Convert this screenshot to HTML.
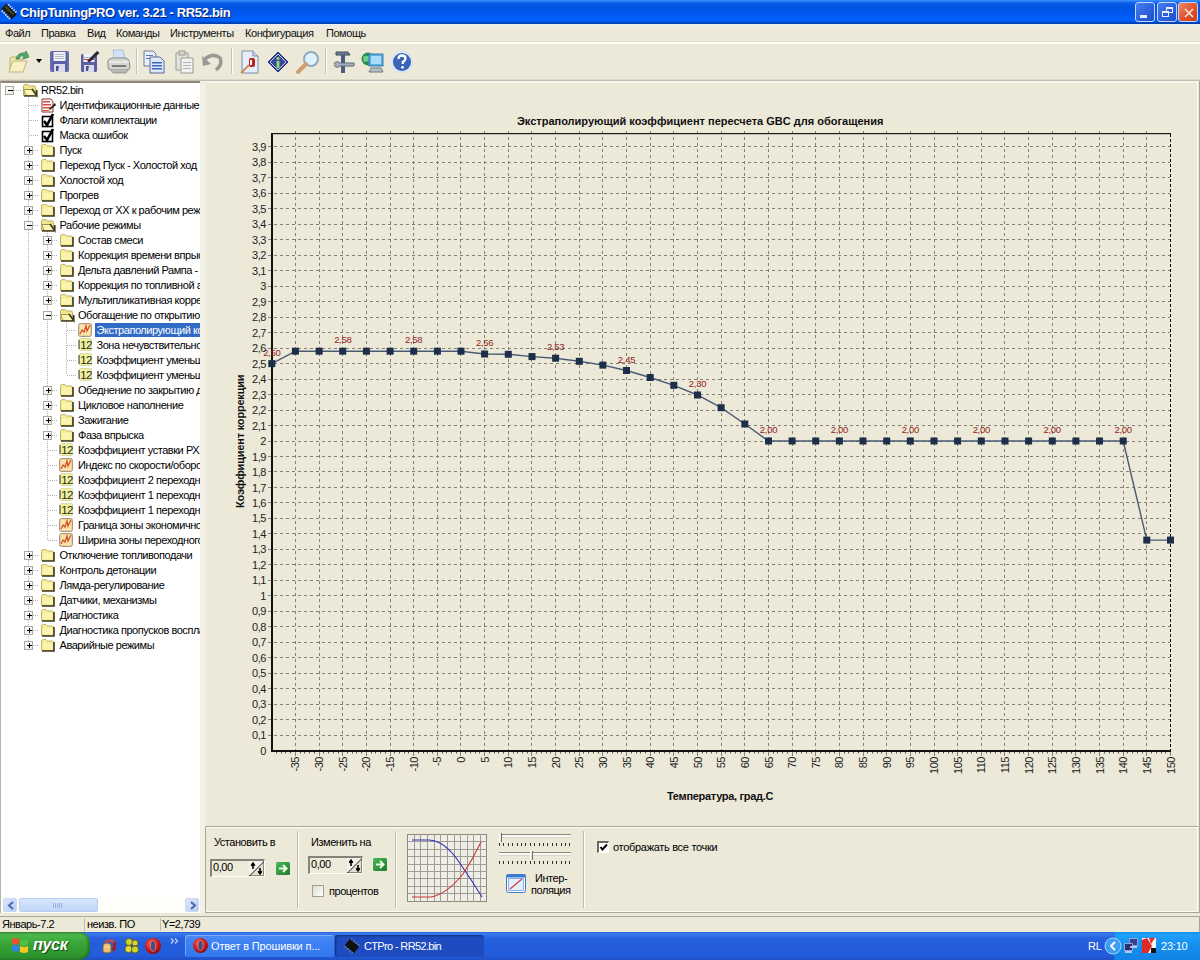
<!DOCTYPE html><html><head><meta charset="utf-8"><title>ChipTuningPRO</title><style>
*{margin:0;padding:0;box-sizing:border-box}
html,body{width:1200px;height:960px;overflow:hidden;background:#ECE9D8;font-family:"Liberation Sans",sans-serif;font-size:11px;color:#000}
.a{position:absolute}
.t{position:absolute;white-space:nowrap;letter-spacing:-0.45px;line-height:13px}
</style></head><body>
<div class="a" style="left:0;top:0;width:1200px;height:24px;background:linear-gradient(#3d95ff 0px,#2a80f8 1px,#0a5ce8 3px,#0054e3 8px,#0056ea 13px,#005ef8 18px,#0060fa 21px,#0048c8 22.5px,#003aa0 24px)"></div>
<div class="a" style="left:0;top:24px;width:1200px;height:1px;background:#e6ecf6"></div>
<svg class="a" style="left:-1px;top:1px" width="20" height="20" viewBox="0 0 20 20"><g transform="translate(10 10.5) rotate(45) translate(-8.5 -7)"><rect x="1" y="3.5" width="15" height="7" fill="#1a1a10"/><rect x="2" y="5" width="12" height="2" fill="#3a4a20"/><rect x="3" y="1.5" width="1.2" height="2" fill="#f0f0f0"/><rect x="3" y="10.5" width="1.2" height="2" fill="#f0f0f0"/><rect x="5.5" y="1.5" width="1.2" height="2" fill="#f0f0f0"/><rect x="5.5" y="10.5" width="1.2" height="2" fill="#f0f0f0"/><rect x="8" y="1.5" width="1.2" height="2" fill="#f0f0f0"/><rect x="8" y="10.5" width="1.2" height="2" fill="#f0f0f0"/><rect x="10.5" y="1.5" width="1.2" height="2" fill="#f0f0f0"/><rect x="10.5" y="10.5" width="1.2" height="2" fill="#f0f0f0"/><rect x="13" y="1.5" width="1.2" height="2" fill="#f0f0f0"/><rect x="13" y="10.5" width="1.2" height="2" fill="#f0f0f0"/></g></svg>
<div class="t" style="left:20px;top:5px;font-weight:bold;font-size:13px;line-height:16px;color:#fff;letter-spacing:-0.35px;text-shadow:1px 1px 0 #0a1e6e">ChipTuningPRO ver. 3.21 - RR52.bin</div>
<div class="a" style="left:1135px;top:2px;width:20px;height:20px;border:1px solid #c4d6fa;border-radius:3px;background:linear-gradient(135deg,#4a7ef0,#2b5fdc 60%,#1f4fc8)"><div class="a" style="left:4px;top:12px;width:7px;height:3px;background:#e8f0ff"></div></div>
<div class="a" style="left:1157px;top:2px;width:20px;height:20px;border:1px solid #c4d6fa;border-radius:3px;background:linear-gradient(135deg,#4a7ef0,#2b5fdc 60%,#1f4fc8)"><div class="a" style="left:8px;top:4px;width:7px;height:6px;border:1px solid #e8f0ff;border-top-width:2px"></div><div class="a" style="left:4px;top:8px;width:7px;height:6px;border:1px solid #e8f0ff;border-top-width:2px;background:#2b5fdc"></div></div>
<div class="a" style="left:1178px;top:2px;width:20px;height:20px;border:1px solid #c4d6fa;border-radius:3px;background:linear-gradient(135deg,#f08a6a,#e0522c 55%,#c8401c)"><svg class="a" style="left:3px;top:3px" width="13" height="13"><path d="M3 3L11 11M11 3L3 11" stroke="#fbe8e0" stroke-width="1.6"/></svg></div>
<div class="a" style="left:0;top:25px;width:1200px;height:4px;background:#efebe0"></div>
<div class="t" style="left:5px;top:27px;color:#111">Файл</div>
<div class="t" style="left:41px;top:27px;color:#111">Правка</div>
<div class="t" style="left:87px;top:27px;color:#111">Вид</div>
<div class="t" style="left:116px;top:27px;color:#111">Команды</div>
<div class="t" style="left:170px;top:27px;color:#111">Инструменты</div>
<div class="t" style="left:245px;top:27px;color:#111">Конфигурация</div>
<div class="t" style="left:326px;top:27px;color:#111">Помощь</div>
<div class="a" style="left:0;top:41px;width:1200px;height:1px;background:#e2dfd0"></div>
<div class="a" style="left:0;top:42px;width:1200px;height:2px;background:#fdfcf4"></div>
<div class="a" style="left:0;top:79px;width:1200px;height:1px;background:#dcd9c8"></div>
<div class="a" style="left:0;top:80px;width:1200px;height:1px;background:#c2bfae"></div>
<div class="a" style="left:200px;top:81px;width:1000px;height:2px;background:#f6f4ec"></div>
<svg class="a" style="left:8px;top:50px" width="22" height="24" viewBox="0 0 22 24"><path d="M2 9 Q2 7 4 7 H8 L10 9 H14 V20 H2 Z" fill="#ece4a8" stroke="#b8ae70" stroke-width="1"/><path d="M1 22 L4 13 Q5 11 7 11 H19 L15 22 Z" fill="#f6f0c4" stroke="#c0b478" stroke-width="1"/><path d="M8 9 Q10 2 17 3 L18 1 L21 7 L15 9 L16 6 Q12 5 11 9 Z" fill="#52a868" stroke="#3a8050" stroke-width="0.8"/></svg>
<svg class="a" style="left:36px;top:59px" width="6" height="4" viewBox="0 0 6 4"><path d="M0 0 L6 0 L3 4 Z" fill="#000"/></svg>
<svg class="a" style="left:50px;top:51px" width="19" height="21" viewBox="0 0 19 21"><rect x="0" y="0" width="19" height="21" rx="2" fill="#5a60a6"/><rect x="1" y="1" width="17" height="19" rx="1.5" fill="none" stroke="#7a80c0" stroke-width="0.8"/><rect x="3.5" y="1" width="12" height="9" fill="#f2f2f6"/><rect x="5" y="3" width="9" height="1" fill="#b4b8cc"/><rect x="5" y="5" width="9" height="1" fill="#b4b8cc"/><rect x="5" y="7" width="9" height="1" fill="#b4b8cc"/><rect x="4" y="13" width="11" height="8" fill="#dcdce8"/><path d="M6 15 H9 L8 20 H6 Z" fill="#4a5090"/></svg>
<svg class="a" style="left:80px;top:49px" width="20" height="24" viewBox="0 0 20 24"><rect x="1" y="5" width="16" height="18" rx="1.5" fill="#5a60a6"/><rect x="3.5" y="5" width="11" height="8" fill="#f2f2f6"/><rect x="4" y="10" width="10" height="1" fill="#d04040"/><rect x="4" y="8" width="10" height="1" fill="#b4b8cc"/><rect x="4" y="16" width="10" height="7" fill="#dcdce8"/><path d="M6 17 H9 L8 22 H6 Z" fill="#4a5090"/><path d="M7 12 L17 2 L19.5 4 L9.5 13.5 Z" fill="#2a2a3a"/></svg>
<svg class="a" style="left:106px;top:49px" width="25" height="25" viewBox="0 0 25 25"><path d="M7 1 H17 L19 10 H8 Z" fill="#cfe2fa" stroke="#a8b8d0" stroke-width="0.8"/><path d="M2 12 Q3 9 7 9 H19 Q22 9 23 12 L24 18 Q24 21 21 21 H5 Q2 21 2 18 Z" fill="#d4d4d0" stroke="#8a8a88" stroke-width="1"/><path d="M3 13 H23" stroke="#f4f4f4" stroke-width="1.2"/><rect x="6" y="16" width="14" height="2" fill="#7a7a78"/><path d="M5 21 L7 24 H20 L22 21" fill="#b8b8b4" stroke="#8a8a88" stroke-width="0.8"/></svg>
<div class="a" style="left:136px;top:48px;width:1px;height:26px;background:#c5c2b0"></div><div class="a" style="left:137px;top:48px;width:1px;height:26px;background:#fff"></div>
<svg class="a" style="left:143px;top:50px" width="22" height="24" viewBox="0 0 22 24"><path d="M1 1 H10 L13 4 V16 H1 Z" fill="#e8f0fc" stroke="#6a7a98" stroke-width="1"/><rect x="3" y="5" width="7" height="1" fill="#5a78b0"/><rect x="3" y="8" width="7" height="1" fill="#5a78b0"/><path d="M7 7 H17 L21 11 V23 H7 Z" fill="#dce8fa" stroke="#5a6a90" stroke-width="1"/><rect x="9" y="12" width="10" height="1.5" fill="#3a68b8"/><rect x="9" y="15" width="10" height="1.5" fill="#3a68b8"/><rect x="9" y="18" width="10" height="1.5" fill="#3a68b8"/></svg>
<svg class="a" style="left:174px;top:50px" width="20" height="24" viewBox="0 0 20 24"><path d="M2 3 H14 V20 H2 Z" fill="#e4e2d8" stroke="#9a9a94" stroke-width="1"/><rect x="5" y="1" width="6" height="4" fill="#d8d6cc" stroke="#9a9a94" stroke-width="1"/><path d="M7 8 H19 V23 H7 Z" fill="#f2f2f0" stroke="#9a9a94" stroke-width="1"/><rect x="9" y="12" width="8" height="1" fill="#b0b0b0"/><rect x="9" y="15" width="8" height="1" fill="#b0b0b0"/><rect x="9" y="18" width="8" height="1" fill="#b0b0b0"/></svg>
<svg class="a" style="left:201px;top:52px" width="23" height="21" viewBox="0 0 23 21"><path d="M3 8 Q12 0 19 6 Q22 12 15 18" fill="none" stroke="#9a9a94" stroke-width="3.5"/><path d="M1 4 L2 14 L10 12 Z" fill="#9a9a94"/></svg>
<div class="a" style="left:231px;top:48px;width:1px;height:26px;background:#c5c2b0"></div><div class="a" style="left:232px;top:48px;width:1px;height:26px;background:#fff"></div>
<svg class="a" style="left:240px;top:50px" width="20" height="24" viewBox="0 0 20 24"><path d="M2 1 H13 L18 6 V23 H2 Z" fill="#e6eefa" stroke="#7a8aa8" stroke-width="1"/><path d="M13 1 V6 H18" fill="#c8d4e8" stroke="#7a8aa8" stroke-width="1"/><rect x="9" y="8" width="6" height="9" rx="2" fill="#c02020"/><rect x="10" y="10" width="2" height="5" fill="#fff"/><path d="M1 23 L9 15" stroke="#c89050" stroke-width="2"/></svg>
<svg class="a" style="left:267px;top:51px" width="22" height="22" viewBox="0 0 22 22"><path d="M11 1 L21 11 L11 21 L1 11 Z" fill="#3a4a98" stroke="#1a2a70" stroke-width="1"/><path d="M11 3 L19 11 L11 19 L3 11 Z" fill="none" stroke="#c0c8f0" stroke-width="1"/><circle cx="11" cy="7.5" r="1.6" fill="#8ee070"/><rect x="9.6" y="10" width="2.8" height="7" fill="#8ee070"/></svg>
<svg class="a" style="left:296px;top:50px" width="24" height="24" viewBox="0 0 24 24"><circle cx="15" cy="9" r="7" fill="#dff0ff" stroke="#90a8c0" stroke-width="2"/><path d="M10 14 L2 22" stroke="#d0a070" stroke-width="4" stroke-linecap="round"/></svg>
<div class="a" style="left:325px;top:48px;width:1px;height:26px;background:#c5c2b0"></div><div class="a" style="left:326px;top:48px;width:1px;height:26px;background:#fff"></div>
<svg class="a" style="left:333px;top:50px" width="23" height="24" viewBox="0 0 23 24"><path d="M3 2 H15 L17 5 H3 Z" fill="#708098" stroke="#404858" stroke-width="1"/><rect x="8" y="5" width="4" height="18" fill="#4a5a80"/><path d="M1 14 Q3 10 7 13 H21 V16 H7 Q3 19 1 15" fill="#a8b0c0" stroke="#606878" stroke-width="1"/></svg>
<svg class="a" style="left:361px;top:50px" width="24" height="24" viewBox="0 0 24 24"><circle cx="7" cy="9" r="6.5" fill="#2a8a5a"/><path d="M2 7 Q6 4 10 8 Q8 12 3 12 Z" fill="#6acd8a"/><rect x="8" y="4" width="14" height="12" fill="#5ab0e8" stroke="#3a7aa8" stroke-width="1"/><rect x="10" y="6" width="10" height="8" fill="#a8dcf8"/><path d="M10 18 H20 L22 22 H8 Z" fill="#b8c0c8" stroke="#70787e" stroke-width="1"/></svg>
<svg class="a" style="left:390px;top:50px" width="24" height="24" viewBox="0 0 24 24"><circle cx="12" cy="12" r="11" fill="#d8e4f4"/><circle cx="12" cy="12" r="9" fill="#3a64b8"/><path d="M8.5 9 Q8.5 5.5 12 5.5 Q15.5 5.5 15.5 8.5 Q15.5 10.5 12.8 12 V14" fill="none" stroke="#fff" stroke-width="2.3"/><circle cx="12.5" cy="17.3" r="1.4" fill="#fff"/></svg>
<div class="a" style="left:0;top:81px;width:200px;height:832px;background:#fff;border-top:2px solid #8c897a;border-left:1px solid #b8b5a4;overflow:hidden">
<div class="a" style="left:27px;top:7px;width:1px;height:556px;background:repeating-linear-gradient(#b4b4b4 0 1px,transparent 1px 2px)"></div>
<div class="a" style="left:46px;top:142px;width:1px;height:316px;background:repeating-linear-gradient(#b4b4b4 0 1px,transparent 1px 2px)"></div>
<div class="a" style="left:65px;top:232px;width:1px;height:60px;background:repeating-linear-gradient(#b4b4b4 0 1px,transparent 1px 2px)"></div>
<div class="a" style="left:9px;top:7px;width:11px;height:1px;background:repeating-linear-gradient(90deg,#b4b4b4 0 1px,transparent 1px 2px)"></div>
<div class="a" style="left:28px;top:22px;width:10px;height:1px;background:repeating-linear-gradient(90deg,#b4b4b4 0 1px,transparent 1px 2px)"></div>
<div class="a" style="left:28px;top:37px;width:10px;height:1px;background:repeating-linear-gradient(90deg,#b4b4b4 0 1px,transparent 1px 2px)"></div>
<div class="a" style="left:28px;top:52px;width:10px;height:1px;background:repeating-linear-gradient(90deg,#b4b4b4 0 1px,transparent 1px 2px)"></div>
<div class="a" style="left:28px;top:67px;width:10px;height:1px;background:repeating-linear-gradient(90deg,#b4b4b4 0 1px,transparent 1px 2px)"></div>
<div class="a" style="left:28px;top:82px;width:10px;height:1px;background:repeating-linear-gradient(90deg,#b4b4b4 0 1px,transparent 1px 2px)"></div>
<div class="a" style="left:28px;top:97px;width:10px;height:1px;background:repeating-linear-gradient(90deg,#b4b4b4 0 1px,transparent 1px 2px)"></div>
<div class="a" style="left:28px;top:112px;width:10px;height:1px;background:repeating-linear-gradient(90deg,#b4b4b4 0 1px,transparent 1px 2px)"></div>
<div class="a" style="left:28px;top:127px;width:10px;height:1px;background:repeating-linear-gradient(90deg,#b4b4b4 0 1px,transparent 1px 2px)"></div>
<div class="a" style="left:28px;top:142px;width:10px;height:1px;background:repeating-linear-gradient(90deg,#b4b4b4 0 1px,transparent 1px 2px)"></div>
<div class="a" style="left:47px;top:157px;width:10px;height:1px;background:repeating-linear-gradient(90deg,#b4b4b4 0 1px,transparent 1px 2px)"></div>
<div class="a" style="left:47px;top:172px;width:10px;height:1px;background:repeating-linear-gradient(90deg,#b4b4b4 0 1px,transparent 1px 2px)"></div>
<div class="a" style="left:47px;top:187px;width:10px;height:1px;background:repeating-linear-gradient(90deg,#b4b4b4 0 1px,transparent 1px 2px)"></div>
<div class="a" style="left:47px;top:202px;width:10px;height:1px;background:repeating-linear-gradient(90deg,#b4b4b4 0 1px,transparent 1px 2px)"></div>
<div class="a" style="left:47px;top:217px;width:10px;height:1px;background:repeating-linear-gradient(90deg,#b4b4b4 0 1px,transparent 1px 2px)"></div>
<div class="a" style="left:47px;top:232px;width:10px;height:1px;background:repeating-linear-gradient(90deg,#b4b4b4 0 1px,transparent 1px 2px)"></div>
<div class="a" style="left:66px;top:247px;width:10px;height:1px;background:repeating-linear-gradient(90deg,#b4b4b4 0 1px,transparent 1px 2px)"></div>
<div class="a" style="left:66px;top:262px;width:10px;height:1px;background:repeating-linear-gradient(90deg,#b4b4b4 0 1px,transparent 1px 2px)"></div>
<div class="a" style="left:66px;top:277px;width:10px;height:1px;background:repeating-linear-gradient(90deg,#b4b4b4 0 1px,transparent 1px 2px)"></div>
<div class="a" style="left:66px;top:292px;width:10px;height:1px;background:repeating-linear-gradient(90deg,#b4b4b4 0 1px,transparent 1px 2px)"></div>
<div class="a" style="left:47px;top:307px;width:10px;height:1px;background:repeating-linear-gradient(90deg,#b4b4b4 0 1px,transparent 1px 2px)"></div>
<div class="a" style="left:47px;top:322px;width:10px;height:1px;background:repeating-linear-gradient(90deg,#b4b4b4 0 1px,transparent 1px 2px)"></div>
<div class="a" style="left:47px;top:337px;width:10px;height:1px;background:repeating-linear-gradient(90deg,#b4b4b4 0 1px,transparent 1px 2px)"></div>
<div class="a" style="left:47px;top:352px;width:10px;height:1px;background:repeating-linear-gradient(90deg,#b4b4b4 0 1px,transparent 1px 2px)"></div>
<div class="a" style="left:47px;top:367px;width:10px;height:1px;background:repeating-linear-gradient(90deg,#b4b4b4 0 1px,transparent 1px 2px)"></div>
<div class="a" style="left:47px;top:382px;width:10px;height:1px;background:repeating-linear-gradient(90deg,#b4b4b4 0 1px,transparent 1px 2px)"></div>
<div class="a" style="left:47px;top:397px;width:10px;height:1px;background:repeating-linear-gradient(90deg,#b4b4b4 0 1px,transparent 1px 2px)"></div>
<div class="a" style="left:47px;top:412px;width:10px;height:1px;background:repeating-linear-gradient(90deg,#b4b4b4 0 1px,transparent 1px 2px)"></div>
<div class="a" style="left:47px;top:427px;width:10px;height:1px;background:repeating-linear-gradient(90deg,#b4b4b4 0 1px,transparent 1px 2px)"></div>
<div class="a" style="left:47px;top:442px;width:10px;height:1px;background:repeating-linear-gradient(90deg,#b4b4b4 0 1px,transparent 1px 2px)"></div>
<div class="a" style="left:47px;top:457px;width:10px;height:1px;background:repeating-linear-gradient(90deg,#b4b4b4 0 1px,transparent 1px 2px)"></div>
<div class="a" style="left:28px;top:472px;width:10px;height:1px;background:repeating-linear-gradient(90deg,#b4b4b4 0 1px,transparent 1px 2px)"></div>
<div class="a" style="left:28px;top:487px;width:10px;height:1px;background:repeating-linear-gradient(90deg,#b4b4b4 0 1px,transparent 1px 2px)"></div>
<div class="a" style="left:28px;top:502px;width:10px;height:1px;background:repeating-linear-gradient(90deg,#b4b4b4 0 1px,transparent 1px 2px)"></div>
<div class="a" style="left:28px;top:517px;width:10px;height:1px;background:repeating-linear-gradient(90deg,#b4b4b4 0 1px,transparent 1px 2px)"></div>
<div class="a" style="left:28px;top:532px;width:10px;height:1px;background:repeating-linear-gradient(90deg,#b4b4b4 0 1px,transparent 1px 2px)"></div>
<div class="a" style="left:28px;top:547px;width:10px;height:1px;background:repeating-linear-gradient(90deg,#b4b4b4 0 1px,transparent 1px 2px)"></div>
<div class="a" style="left:28px;top:562px;width:10px;height:1px;background:repeating-linear-gradient(90deg,#b4b4b4 0 1px,transparent 1px 2px)"></div>
<div class="a" style="left:4px;top:3px;width:9px;height:9px;border:1px solid #a8a8a8;background:linear-gradient(135deg,#fff,#e8e8e0)"><div class="a" style="left:2px;top:3px;width:5px;height:1px;background:#000"></div></div>
<svg class="a" style="left:21px;top:-1px" width="16" height="16" viewBox="0 0 16 16"><path d="M1.5 4.5 Q1.5 2.5 3.5 2.5 H6 L7.5 4 H12 Q13.5 4 13.5 5.5 V13.5 H1.5 Z" fill="#f0e68e" stroke="#b8ac60" stroke-width="1"/><path d="M1.5 7.5 H10 L14.5 13.5 H4 Z" fill="#faf4b8" stroke="#a09450" stroke-width="1"/><path d="M10 7 L14.8 13.5 V8" fill="none" stroke="#3c3820" stroke-width="1.6"/><path d="M2 14 H14.5" stroke="#3c3820" stroke-width="1.4"/></svg>
<div class="t" style="left:40px;top:0.5px;">RR52.bin</div>
<svg class="a" style="left:39px;top:14px" width="16" height="16" viewBox="0 0 16 16"><path d="M2 2 H11 L13 5 V15 H2 Z" fill="#fff" stroke="#903030" stroke-width="1"/><g fill="#e04848"><rect x="3" y="4" width="7" height="1.5"/><rect x="3" y="7" width="8" height="1.5"/><rect x="3" y="10" width="8" height="1.5"/><rect x="3" y="13" width="6" height="1"/></g><path d="M9 12 L15 6 L16 8 L10 13 Z" fill="#202020"/><path d="M9 12 L10 13 L8 14 Z" fill="#d0b060"/></svg>
<div class="t" style="left:58.5px;top:15.5px;">Идентификационные данные</div>
<svg class="a" style="left:39px;top:29px" width="16" height="16" viewBox="0 0 16 16"><rect x="2.5" y="4.5" width="10" height="10" fill="#fff" stroke="#000" stroke-width="1.6"/><path d="M4 9 L7 13 L13 2" fill="none" stroke="#000" stroke-width="2.6"/></svg>
<div class="t" style="left:58.5px;top:30.5px;">Флаги комплектации</div>
<svg class="a" style="left:39px;top:44px" width="16" height="16" viewBox="0 0 16 16"><rect x="2.5" y="4.5" width="10" height="10" fill="#fff" stroke="#000" stroke-width="1.6"/><path d="M4 9 L7 13 L13 2" fill="none" stroke="#000" stroke-width="2.6"/></svg>
<div class="t" style="left:58.5px;top:45.5px;">Маска ошибок</div>
<div class="a" style="left:23px;top:63px;width:9px;height:9px;border:1px solid #a8a8a8;background:linear-gradient(135deg,#fff,#e8e8e0)"><div class="a" style="left:2px;top:3px;width:5px;height:1px;background:#000"></div><div class="a" style="left:4px;top:1px;width:1px;height:5px;background:#000"></div></div>
<svg class="a" style="left:39px;top:59px" width="16" height="16" viewBox="0 0 16 16"><path d="M1.5 4.5 Q1.5 2.5 3.5 2.5 H6 L7.5 4 H12 Q13.5 4 13.5 5.5 V13.5 H1.5 Z" fill="#f6ee96" stroke="#c0b468" stroke-width="1"/><path d="M2 14 H14 V5" fill="none" stroke="#3c3820" stroke-width="1.6"/><rect x="3" y="6" width="9" height="6" fill="#faf4b0"/></svg>
<div class="t" style="left:58.5px;top:60.5px;">Пуск</div>
<div class="a" style="left:23px;top:78px;width:9px;height:9px;border:1px solid #a8a8a8;background:linear-gradient(135deg,#fff,#e8e8e0)"><div class="a" style="left:2px;top:3px;width:5px;height:1px;background:#000"></div><div class="a" style="left:4px;top:1px;width:1px;height:5px;background:#000"></div></div>
<svg class="a" style="left:39px;top:74px" width="16" height="16" viewBox="0 0 16 16"><path d="M1.5 4.5 Q1.5 2.5 3.5 2.5 H6 L7.5 4 H12 Q13.5 4 13.5 5.5 V13.5 H1.5 Z" fill="#f6ee96" stroke="#c0b468" stroke-width="1"/><path d="M2 14 H14 V5" fill="none" stroke="#3c3820" stroke-width="1.6"/><rect x="3" y="6" width="9" height="6" fill="#faf4b0"/></svg>
<div class="t" style="left:58.5px;top:75.5px;">Переход Пуск - Холостой ход</div>
<div class="a" style="left:23px;top:93px;width:9px;height:9px;border:1px solid #a8a8a8;background:linear-gradient(135deg,#fff,#e8e8e0)"><div class="a" style="left:2px;top:3px;width:5px;height:1px;background:#000"></div><div class="a" style="left:4px;top:1px;width:1px;height:5px;background:#000"></div></div>
<svg class="a" style="left:39px;top:89px" width="16" height="16" viewBox="0 0 16 16"><path d="M1.5 4.5 Q1.5 2.5 3.5 2.5 H6 L7.5 4 H12 Q13.5 4 13.5 5.5 V13.5 H1.5 Z" fill="#f6ee96" stroke="#c0b468" stroke-width="1"/><path d="M2 14 H14 V5" fill="none" stroke="#3c3820" stroke-width="1.6"/><rect x="3" y="6" width="9" height="6" fill="#faf4b0"/></svg>
<div class="t" style="left:58.5px;top:90.5px;">Холостой ход</div>
<div class="a" style="left:23px;top:108px;width:9px;height:9px;border:1px solid #a8a8a8;background:linear-gradient(135deg,#fff,#e8e8e0)"><div class="a" style="left:2px;top:3px;width:5px;height:1px;background:#000"></div><div class="a" style="left:4px;top:1px;width:1px;height:5px;background:#000"></div></div>
<svg class="a" style="left:39px;top:104px" width="16" height="16" viewBox="0 0 16 16"><path d="M1.5 4.5 Q1.5 2.5 3.5 2.5 H6 L7.5 4 H12 Q13.5 4 13.5 5.5 V13.5 H1.5 Z" fill="#f6ee96" stroke="#c0b468" stroke-width="1"/><path d="M2 14 H14 V5" fill="none" stroke="#3c3820" stroke-width="1.6"/><rect x="3" y="6" width="9" height="6" fill="#faf4b0"/></svg>
<div class="t" style="left:58.5px;top:105.5px;">Прогрев</div>
<div class="a" style="left:23px;top:123px;width:9px;height:9px;border:1px solid #a8a8a8;background:linear-gradient(135deg,#fff,#e8e8e0)"><div class="a" style="left:2px;top:3px;width:5px;height:1px;background:#000"></div><div class="a" style="left:4px;top:1px;width:1px;height:5px;background:#000"></div></div>
<svg class="a" style="left:39px;top:119px" width="16" height="16" viewBox="0 0 16 16"><path d="M1.5 4.5 Q1.5 2.5 3.5 2.5 H6 L7.5 4 H12 Q13.5 4 13.5 5.5 V13.5 H1.5 Z" fill="#f6ee96" stroke="#c0b468" stroke-width="1"/><path d="M2 14 H14 V5" fill="none" stroke="#3c3820" stroke-width="1.6"/><rect x="3" y="6" width="9" height="6" fill="#faf4b0"/></svg>
<div class="t" style="left:58.5px;top:120.5px;">Переход от ХХ к рабочим режимам</div>
<div class="a" style="left:23px;top:138px;width:9px;height:9px;border:1px solid #a8a8a8;background:linear-gradient(135deg,#fff,#e8e8e0)"><div class="a" style="left:2px;top:3px;width:5px;height:1px;background:#000"></div></div>
<svg class="a" style="left:39px;top:134px" width="16" height="16" viewBox="0 0 16 16"><path d="M1.5 4.5 Q1.5 2.5 3.5 2.5 H6 L7.5 4 H12 Q13.5 4 13.5 5.5 V13.5 H1.5 Z" fill="#f0e68e" stroke="#b8ac60" stroke-width="1"/><path d="M1.5 7.5 H10 L14.5 13.5 H4 Z" fill="#faf4b8" stroke="#a09450" stroke-width="1"/><path d="M10 7 L14.8 13.5 V8" fill="none" stroke="#3c3820" stroke-width="1.6"/><path d="M2 14 H14.5" stroke="#3c3820" stroke-width="1.4"/></svg>
<div class="t" style="left:58.5px;top:135.5px;">Рабочие режимы</div>
<div class="a" style="left:42px;top:153px;width:9px;height:9px;border:1px solid #a8a8a8;background:linear-gradient(135deg,#fff,#e8e8e0)"><div class="a" style="left:2px;top:3px;width:5px;height:1px;background:#000"></div><div class="a" style="left:4px;top:1px;width:1px;height:5px;background:#000"></div></div>
<svg class="a" style="left:58px;top:149px" width="16" height="16" viewBox="0 0 16 16"><path d="M1.5 4.5 Q1.5 2.5 3.5 2.5 H6 L7.5 4 H12 Q13.5 4 13.5 5.5 V13.5 H1.5 Z" fill="#f6ee96" stroke="#c0b468" stroke-width="1"/><path d="M2 14 H14 V5" fill="none" stroke="#3c3820" stroke-width="1.6"/><rect x="3" y="6" width="9" height="6" fill="#faf4b0"/></svg>
<div class="t" style="left:77px;top:150.5px;">Состав смеси</div>
<div class="a" style="left:42px;top:168px;width:9px;height:9px;border:1px solid #a8a8a8;background:linear-gradient(135deg,#fff,#e8e8e0)"><div class="a" style="left:2px;top:3px;width:5px;height:1px;background:#000"></div><div class="a" style="left:4px;top:1px;width:1px;height:5px;background:#000"></div></div>
<svg class="a" style="left:58px;top:164px" width="16" height="16" viewBox="0 0 16 16"><path d="M1.5 4.5 Q1.5 2.5 3.5 2.5 H6 L7.5 4 H12 Q13.5 4 13.5 5.5 V13.5 H1.5 Z" fill="#f6ee96" stroke="#c0b468" stroke-width="1"/><path d="M2 14 H14 V5" fill="none" stroke="#3c3820" stroke-width="1.6"/><rect x="3" y="6" width="9" height="6" fill="#faf4b0"/></svg>
<div class="t" style="left:77px;top:165.5px;">Коррекция времени впрыска</div>
<div class="a" style="left:42px;top:183px;width:9px;height:9px;border:1px solid #a8a8a8;background:linear-gradient(135deg,#fff,#e8e8e0)"><div class="a" style="left:2px;top:3px;width:5px;height:1px;background:#000"></div><div class="a" style="left:4px;top:1px;width:1px;height:5px;background:#000"></div></div>
<svg class="a" style="left:58px;top:179px" width="16" height="16" viewBox="0 0 16 16"><path d="M1.5 4.5 Q1.5 2.5 3.5 2.5 H6 L7.5 4 H12 Q13.5 4 13.5 5.5 V13.5 H1.5 Z" fill="#f6ee96" stroke="#c0b468" stroke-width="1"/><path d="M2 14 H14 V5" fill="none" stroke="#3c3820" stroke-width="1.6"/><rect x="3" y="6" width="9" height="6" fill="#faf4b0"/></svg>
<div class="t" style="left:77px;top:180.5px;">Дельта давлений Рампа - Впуск</div>
<div class="a" style="left:42px;top:198px;width:9px;height:9px;border:1px solid #a8a8a8;background:linear-gradient(135deg,#fff,#e8e8e0)"><div class="a" style="left:2px;top:3px;width:5px;height:1px;background:#000"></div><div class="a" style="left:4px;top:1px;width:1px;height:5px;background:#000"></div></div>
<svg class="a" style="left:58px;top:194px" width="16" height="16" viewBox="0 0 16 16"><path d="M1.5 4.5 Q1.5 2.5 3.5 2.5 H6 L7.5 4 H12 Q13.5 4 13.5 5.5 V13.5 H1.5 Z" fill="#f6ee96" stroke="#c0b468" stroke-width="1"/><path d="M2 14 H14 V5" fill="none" stroke="#3c3820" stroke-width="1.6"/><rect x="3" y="6" width="9" height="6" fill="#faf4b0"/></svg>
<div class="t" style="left:77px;top:195.5px;">Коррекция по топливной адаптации</div>
<div class="a" style="left:42px;top:213px;width:9px;height:9px;border:1px solid #a8a8a8;background:linear-gradient(135deg,#fff,#e8e8e0)"><div class="a" style="left:2px;top:3px;width:5px;height:1px;background:#000"></div><div class="a" style="left:4px;top:1px;width:1px;height:5px;background:#000"></div></div>
<svg class="a" style="left:58px;top:209px" width="16" height="16" viewBox="0 0 16 16"><path d="M1.5 4.5 Q1.5 2.5 3.5 2.5 H6 L7.5 4 H12 Q13.5 4 13.5 5.5 V13.5 H1.5 Z" fill="#f6ee96" stroke="#c0b468" stroke-width="1"/><path d="M2 14 H14 V5" fill="none" stroke="#3c3820" stroke-width="1.6"/><rect x="3" y="6" width="9" height="6" fill="#faf4b0"/></svg>
<div class="t" style="left:77px;top:210.5px;">Мультипликативная коррекция</div>
<div class="a" style="left:42px;top:228px;width:9px;height:9px;border:1px solid #a8a8a8;background:linear-gradient(135deg,#fff,#e8e8e0)"><div class="a" style="left:2px;top:3px;width:5px;height:1px;background:#000"></div></div>
<svg class="a" style="left:58px;top:224px" width="16" height="16" viewBox="0 0 16 16"><path d="M1.5 4.5 Q1.5 2.5 3.5 2.5 H6 L7.5 4 H12 Q13.5 4 13.5 5.5 V13.5 H1.5 Z" fill="#f0e68e" stroke="#b8ac60" stroke-width="1"/><path d="M1.5 7.5 H10 L14.5 13.5 H4 Z" fill="#faf4b8" stroke="#a09450" stroke-width="1"/><path d="M10 7 L14.8 13.5 V8" fill="none" stroke="#3c3820" stroke-width="1.6"/><path d="M2 14 H14.5" stroke="#3c3820" stroke-width="1.4"/></svg>
<div class="t" style="left:77px;top:225.5px;">Обогащение по открытию дросселя</div>
<svg class="a" style="left:77px;top:239px" width="16" height="16" viewBox="0 0 16 16"><rect x="0.5" y="1.5" width="13" height="13" rx="2" fill="#f0d098" stroke="#a89888" stroke-width="1"/><rect x="2" y="3" width="10" height="10" fill="#f8e4b0"/><path d="M2 12 L4 8 L6 10 L8 4 L9 9 L12 3" fill="none" stroke="#d85020" stroke-width="1.3"/></svg>
<div class="a" style="left:94px;top:240px;width:120px;height:14px;background:#316ac5"></div>
<div class="t" style="left:95.5px;top:240.5px;color:#fff;">Экстраполирующий коэффициент</div>
<svg class="a" style="left:77px;top:254px" width="16" height="16" viewBox="0 0 16 16"><rect x="1.5" y="1.5" width="12" height="12" rx="1" fill="#eef0a0" stroke="#d8dca8" stroke-width="1"/><text x="8" y="12" font-family="Liberation Sans" font-size="11.5" text-anchor="middle" fill="#2a2a10" letter-spacing="-0.6">12</text><rect x="0.5" y="3" width="1" height="9" fill="#3a3410"/></svg>
<div class="t" style="left:95.5px;top:255.5px;">Зона нечувствительности</div>
<svg class="a" style="left:77px;top:269px" width="16" height="16" viewBox="0 0 16 16"><rect x="1.5" y="1.5" width="12" height="12" rx="1" fill="#eef0a0" stroke="#d8dca8" stroke-width="1"/><text x="8" y="12" font-family="Liberation Sans" font-size="11.5" text-anchor="middle" fill="#2a2a10" letter-spacing="-0.6">12</text><rect x="0.5" y="3" width="1" height="9" fill="#3a3410"/></svg>
<div class="t" style="left:95.5px;top:270.5px;">Коэффициент уменьшения</div>
<svg class="a" style="left:77px;top:284px" width="16" height="16" viewBox="0 0 16 16"><rect x="1.5" y="1.5" width="12" height="12" rx="1" fill="#eef0a0" stroke="#d8dca8" stroke-width="1"/><text x="8" y="12" font-family="Liberation Sans" font-size="11.5" text-anchor="middle" fill="#2a2a10" letter-spacing="-0.6">12</text><rect x="0.5" y="3" width="1" height="9" fill="#3a3410"/></svg>
<div class="t" style="left:95.5px;top:285.5px;">Коэффициент уменьшения</div>
<div class="a" style="left:42px;top:303px;width:9px;height:9px;border:1px solid #a8a8a8;background:linear-gradient(135deg,#fff,#e8e8e0)"><div class="a" style="left:2px;top:3px;width:5px;height:1px;background:#000"></div><div class="a" style="left:4px;top:1px;width:1px;height:5px;background:#000"></div></div>
<svg class="a" style="left:58px;top:299px" width="16" height="16" viewBox="0 0 16 16"><path d="M1.5 4.5 Q1.5 2.5 3.5 2.5 H6 L7.5 4 H12 Q13.5 4 13.5 5.5 V13.5 H1.5 Z" fill="#f6ee96" stroke="#c0b468" stroke-width="1"/><path d="M2 14 H14 V5" fill="none" stroke="#3c3820" stroke-width="1.6"/><rect x="3" y="6" width="9" height="6" fill="#faf4b0"/></svg>
<div class="t" style="left:77px;top:300.5px;">Обеднение по закрытию дросселя</div>
<div class="a" style="left:42px;top:318px;width:9px;height:9px;border:1px solid #a8a8a8;background:linear-gradient(135deg,#fff,#e8e8e0)"><div class="a" style="left:2px;top:3px;width:5px;height:1px;background:#000"></div><div class="a" style="left:4px;top:1px;width:1px;height:5px;background:#000"></div></div>
<svg class="a" style="left:58px;top:314px" width="16" height="16" viewBox="0 0 16 16"><path d="M1.5 4.5 Q1.5 2.5 3.5 2.5 H6 L7.5 4 H12 Q13.5 4 13.5 5.5 V13.5 H1.5 Z" fill="#f6ee96" stroke="#c0b468" stroke-width="1"/><path d="M2 14 H14 V5" fill="none" stroke="#3c3820" stroke-width="1.6"/><rect x="3" y="6" width="9" height="6" fill="#faf4b0"/></svg>
<div class="t" style="left:77px;top:315.5px;">Цикловое наполнение</div>
<div class="a" style="left:42px;top:333px;width:9px;height:9px;border:1px solid #a8a8a8;background:linear-gradient(135deg,#fff,#e8e8e0)"><div class="a" style="left:2px;top:3px;width:5px;height:1px;background:#000"></div><div class="a" style="left:4px;top:1px;width:1px;height:5px;background:#000"></div></div>
<svg class="a" style="left:58px;top:329px" width="16" height="16" viewBox="0 0 16 16"><path d="M1.5 4.5 Q1.5 2.5 3.5 2.5 H6 L7.5 4 H12 Q13.5 4 13.5 5.5 V13.5 H1.5 Z" fill="#f6ee96" stroke="#c0b468" stroke-width="1"/><path d="M2 14 H14 V5" fill="none" stroke="#3c3820" stroke-width="1.6"/><rect x="3" y="6" width="9" height="6" fill="#faf4b0"/></svg>
<div class="t" style="left:77px;top:330.5px;">Зажигание</div>
<div class="a" style="left:42px;top:348px;width:9px;height:9px;border:1px solid #a8a8a8;background:linear-gradient(135deg,#fff,#e8e8e0)"><div class="a" style="left:2px;top:3px;width:5px;height:1px;background:#000"></div><div class="a" style="left:4px;top:1px;width:1px;height:5px;background:#000"></div></div>
<svg class="a" style="left:58px;top:344px" width="16" height="16" viewBox="0 0 16 16"><path d="M1.5 4.5 Q1.5 2.5 3.5 2.5 H6 L7.5 4 H12 Q13.5 4 13.5 5.5 V13.5 H1.5 Z" fill="#f6ee96" stroke="#c0b468" stroke-width="1"/><path d="M2 14 H14 V5" fill="none" stroke="#3c3820" stroke-width="1.6"/><rect x="3" y="6" width="9" height="6" fill="#faf4b0"/></svg>
<div class="t" style="left:77px;top:345.5px;">Фаза впрыска</div>
<svg class="a" style="left:58px;top:359px" width="16" height="16" viewBox="0 0 16 16"><rect x="1.5" y="1.5" width="12" height="12" rx="1" fill="#eef0a0" stroke="#d8dca8" stroke-width="1"/><text x="8" y="12" font-family="Liberation Sans" font-size="11.5" text-anchor="middle" fill="#2a2a10" letter-spacing="-0.6">12</text><rect x="0.5" y="3" width="1" height="9" fill="#3a3410"/></svg>
<div class="t" style="left:77px;top:360.5px;">Коэффициент уставки РХХ</div>
<svg class="a" style="left:58px;top:374px" width="16" height="16" viewBox="0 0 16 16"><rect x="0.5" y="1.5" width="13" height="13" rx="2" fill="#f0d098" stroke="#a89888" stroke-width="1"/><rect x="2" y="3" width="10" height="10" fill="#f8e4b0"/><path d="M2 12 L4 8 L6 10 L8 4 L9 9 L12 3" fill="none" stroke="#d85020" stroke-width="1.3"/></svg>
<div class="t" style="left:77px;top:375.5px;">Индекс по скорости/оборотам</div>
<svg class="a" style="left:58px;top:389px" width="16" height="16" viewBox="0 0 16 16"><rect x="1.5" y="1.5" width="12" height="12" rx="1" fill="#eef0a0" stroke="#d8dca8" stroke-width="1"/><text x="8" y="12" font-family="Liberation Sans" font-size="11.5" text-anchor="middle" fill="#2a2a10" letter-spacing="-0.6">12</text><rect x="0.5" y="3" width="1" height="9" fill="#3a3410"/></svg>
<div class="t" style="left:77px;top:390.5px;">Коэффициент 2 переходного</div>
<svg class="a" style="left:58px;top:404px" width="16" height="16" viewBox="0 0 16 16"><rect x="1.5" y="1.5" width="12" height="12" rx="1" fill="#eef0a0" stroke="#d8dca8" stroke-width="1"/><text x="8" y="12" font-family="Liberation Sans" font-size="11.5" text-anchor="middle" fill="#2a2a10" letter-spacing="-0.6">12</text><rect x="0.5" y="3" width="1" height="9" fill="#3a3410"/></svg>
<div class="t" style="left:77px;top:405.5px;">Коэффициент 1 переходного</div>
<svg class="a" style="left:58px;top:419px" width="16" height="16" viewBox="0 0 16 16"><rect x="1.5" y="1.5" width="12" height="12" rx="1" fill="#eef0a0" stroke="#d8dca8" stroke-width="1"/><text x="8" y="12" font-family="Liberation Sans" font-size="11.5" text-anchor="middle" fill="#2a2a10" letter-spacing="-0.6">12</text><rect x="0.5" y="3" width="1" height="9" fill="#3a3410"/></svg>
<div class="t" style="left:77px;top:420.5px;">Коэффициент 1 переходного</div>
<svg class="a" style="left:58px;top:434px" width="16" height="16" viewBox="0 0 16 16"><rect x="0.5" y="1.5" width="13" height="13" rx="2" fill="#f0d098" stroke="#a89888" stroke-width="1"/><rect x="2" y="3" width="10" height="10" fill="#f8e4b0"/><path d="M2 12 L4 8 L6 10 L8 4 L9 9 L12 3" fill="none" stroke="#d85020" stroke-width="1.3"/></svg>
<div class="t" style="left:77px;top:435.5px;">Граница зоны экономичного</div>
<svg class="a" style="left:58px;top:449px" width="16" height="16" viewBox="0 0 16 16"><rect x="0.5" y="1.5" width="13" height="13" rx="2" fill="#f0d098" stroke="#a89888" stroke-width="1"/><rect x="2" y="3" width="10" height="10" fill="#f8e4b0"/><path d="M2 12 L4 8 L6 10 L8 4 L9 9 L12 3" fill="none" stroke="#d85020" stroke-width="1.3"/></svg>
<div class="t" style="left:77px;top:450.5px;">Ширина зоны переходного</div>
<div class="a" style="left:23px;top:468px;width:9px;height:9px;border:1px solid #a8a8a8;background:linear-gradient(135deg,#fff,#e8e8e0)"><div class="a" style="left:2px;top:3px;width:5px;height:1px;background:#000"></div><div class="a" style="left:4px;top:1px;width:1px;height:5px;background:#000"></div></div>
<svg class="a" style="left:39px;top:464px" width="16" height="16" viewBox="0 0 16 16"><path d="M1.5 4.5 Q1.5 2.5 3.5 2.5 H6 L7.5 4 H12 Q13.5 4 13.5 5.5 V13.5 H1.5 Z" fill="#f6ee96" stroke="#c0b468" stroke-width="1"/><path d="M2 14 H14 V5" fill="none" stroke="#3c3820" stroke-width="1.6"/><rect x="3" y="6" width="9" height="6" fill="#faf4b0"/></svg>
<div class="t" style="left:58.5px;top:465.5px;">Отключение топливоподачи</div>
<div class="a" style="left:23px;top:483px;width:9px;height:9px;border:1px solid #a8a8a8;background:linear-gradient(135deg,#fff,#e8e8e0)"><div class="a" style="left:2px;top:3px;width:5px;height:1px;background:#000"></div><div class="a" style="left:4px;top:1px;width:1px;height:5px;background:#000"></div></div>
<svg class="a" style="left:39px;top:479px" width="16" height="16" viewBox="0 0 16 16"><path d="M1.5 4.5 Q1.5 2.5 3.5 2.5 H6 L7.5 4 H12 Q13.5 4 13.5 5.5 V13.5 H1.5 Z" fill="#f6ee96" stroke="#c0b468" stroke-width="1"/><path d="M2 14 H14 V5" fill="none" stroke="#3c3820" stroke-width="1.6"/><rect x="3" y="6" width="9" height="6" fill="#faf4b0"/></svg>
<div class="t" style="left:58.5px;top:480.5px;">Контроль детонации</div>
<div class="a" style="left:23px;top:498px;width:9px;height:9px;border:1px solid #a8a8a8;background:linear-gradient(135deg,#fff,#e8e8e0)"><div class="a" style="left:2px;top:3px;width:5px;height:1px;background:#000"></div><div class="a" style="left:4px;top:1px;width:1px;height:5px;background:#000"></div></div>
<svg class="a" style="left:39px;top:494px" width="16" height="16" viewBox="0 0 16 16"><path d="M1.5 4.5 Q1.5 2.5 3.5 2.5 H6 L7.5 4 H12 Q13.5 4 13.5 5.5 V13.5 H1.5 Z" fill="#f6ee96" stroke="#c0b468" stroke-width="1"/><path d="M2 14 H14 V5" fill="none" stroke="#3c3820" stroke-width="1.6"/><rect x="3" y="6" width="9" height="6" fill="#faf4b0"/></svg>
<div class="t" style="left:58.5px;top:495.5px;">Лямда-регулирование</div>
<div class="a" style="left:23px;top:513px;width:9px;height:9px;border:1px solid #a8a8a8;background:linear-gradient(135deg,#fff,#e8e8e0)"><div class="a" style="left:2px;top:3px;width:5px;height:1px;background:#000"></div><div class="a" style="left:4px;top:1px;width:1px;height:5px;background:#000"></div></div>
<svg class="a" style="left:39px;top:509px" width="16" height="16" viewBox="0 0 16 16"><path d="M1.5 4.5 Q1.5 2.5 3.5 2.5 H6 L7.5 4 H12 Q13.5 4 13.5 5.5 V13.5 H1.5 Z" fill="#f6ee96" stroke="#c0b468" stroke-width="1"/><path d="M2 14 H14 V5" fill="none" stroke="#3c3820" stroke-width="1.6"/><rect x="3" y="6" width="9" height="6" fill="#faf4b0"/></svg>
<div class="t" style="left:58.5px;top:510.5px;">Датчики, механизмы</div>
<div class="a" style="left:23px;top:528px;width:9px;height:9px;border:1px solid #a8a8a8;background:linear-gradient(135deg,#fff,#e8e8e0)"><div class="a" style="left:2px;top:3px;width:5px;height:1px;background:#000"></div><div class="a" style="left:4px;top:1px;width:1px;height:5px;background:#000"></div></div>
<svg class="a" style="left:39px;top:524px" width="16" height="16" viewBox="0 0 16 16"><path d="M1.5 4.5 Q1.5 2.5 3.5 2.5 H6 L7.5 4 H12 Q13.5 4 13.5 5.5 V13.5 H1.5 Z" fill="#f6ee96" stroke="#c0b468" stroke-width="1"/><path d="M2 14 H14 V5" fill="none" stroke="#3c3820" stroke-width="1.6"/><rect x="3" y="6" width="9" height="6" fill="#faf4b0"/></svg>
<div class="t" style="left:58.5px;top:525.5px;">Диагностика</div>
<div class="a" style="left:23px;top:543px;width:9px;height:9px;border:1px solid #a8a8a8;background:linear-gradient(135deg,#fff,#e8e8e0)"><div class="a" style="left:2px;top:3px;width:5px;height:1px;background:#000"></div><div class="a" style="left:4px;top:1px;width:1px;height:5px;background:#000"></div></div>
<svg class="a" style="left:39px;top:539px" width="16" height="16" viewBox="0 0 16 16"><path d="M1.5 4.5 Q1.5 2.5 3.5 2.5 H6 L7.5 4 H12 Q13.5 4 13.5 5.5 V13.5 H1.5 Z" fill="#f6ee96" stroke="#c0b468" stroke-width="1"/><path d="M2 14 H14 V5" fill="none" stroke="#3c3820" stroke-width="1.6"/><rect x="3" y="6" width="9" height="6" fill="#faf4b0"/></svg>
<div class="t" style="left:58.5px;top:540.5px;">Диагностика пропусков воспламенения</div>
<div class="a" style="left:23px;top:558px;width:9px;height:9px;border:1px solid #a8a8a8;background:linear-gradient(135deg,#fff,#e8e8e0)"><div class="a" style="left:2px;top:3px;width:5px;height:1px;background:#000"></div><div class="a" style="left:4px;top:1px;width:1px;height:5px;background:#000"></div></div>
<svg class="a" style="left:39px;top:554px" width="16" height="16" viewBox="0 0 16 16"><path d="M1.5 4.5 Q1.5 2.5 3.5 2.5 H6 L7.5 4 H12 Q13.5 4 13.5 5.5 V13.5 H1.5 Z" fill="#f6ee96" stroke="#c0b468" stroke-width="1"/><path d="M2 14 H14 V5" fill="none" stroke="#3c3820" stroke-width="1.6"/><rect x="3" y="6" width="9" height="6" fill="#faf4b0"/></svg>
<div class="t" style="left:58.5px;top:555.5px;">Аварийные режимы</div>
<div class="a" style="left:0px;top:814px;width:200px;height:16px;background:#fefefb"></div>
<div class="a" style="left:2px;top:815px;width:14px;height:14px;border-radius:2px;background:linear-gradient(135deg,#dce8fc,#b8cdf4);border:1px solid #c8d8f4"><svg class="a" style="left:3px;top:2px" width="8" height="9"><path d="M6 1 L2 4.5 L6 8" fill="none" stroke="#4a6ab0" stroke-width="2"/></svg></div>
<div class="a" style="left:18px;top:815px;width:79px;height:14px;border-radius:2px;background:linear-gradient(#d8e6fc,#c2d6f8);border:1px solid #b8ccf0"><div class="a" style="left:33px;top:4px;width:9px;height:5px;background:repeating-linear-gradient(90deg,#9ab0e0 0 1px,transparent 1px 2px)"></div></div>
<div class="a" style="left:184px;top:815px;width:14px;height:14px;border-radius:2px;background:linear-gradient(135deg,#dce8fc,#b8cdf4);border:1px solid #c8d8f4"><svg class="a" style="left:3px;top:2px" width="8" height="9"><path d="M2 1 L6 4.5 L2 8" fill="none" stroke="#4a6ab0" stroke-width="2"/></svg></div>
</div>
<div class="a" style="left:200px;top:81px;width:6px;height:832px;background:#f3f1e6"></div>
<div class="a" style="left:1197px;top:81px;width:1px;height:832px;background:#fbfaf2"></div>
<div class="a" style="left:1199px;top:81px;width:1px;height:851px;background:#a8a594"></div>
<div class="a" style="left:205px;top:82px;width:990px;height:1px;background:#f6f4ea"></div>
<svg class="a" style="left:0;top:0" width="1200" height="960" viewBox="0 0 1200 960"><line x1="268" y1="735.5" x2="1170" y2="735.5" stroke="#848078" stroke-width="1" stroke-dasharray="3 3"/><line x1="268" y1="719.5" x2="1170" y2="719.5" stroke="#848078" stroke-width="1" stroke-dasharray="3 3"/><line x1="268" y1="704.5" x2="1170" y2="704.5" stroke="#848078" stroke-width="1" stroke-dasharray="3 3"/><line x1="268" y1="688.5" x2="1170" y2="688.5" stroke="#848078" stroke-width="1" stroke-dasharray="3 3"/><line x1="268" y1="673.5" x2="1170" y2="673.5" stroke="#848078" stroke-width="1" stroke-dasharray="3 3"/><line x1="268" y1="657.5" x2="1170" y2="657.5" stroke="#848078" stroke-width="1" stroke-dasharray="3 3"/><line x1="268" y1="642.5" x2="1170" y2="642.5" stroke="#848078" stroke-width="1" stroke-dasharray="3 3"/><line x1="268" y1="626.5" x2="1170" y2="626.5" stroke="#848078" stroke-width="1" stroke-dasharray="3 3"/><line x1="268" y1="611.5" x2="1170" y2="611.5" stroke="#848078" stroke-width="1" stroke-dasharray="3 3"/><line x1="268" y1="595.5" x2="1170" y2="595.5" stroke="#848078" stroke-width="1" stroke-dasharray="3 3"/><line x1="268" y1="580.5" x2="1170" y2="580.5" stroke="#848078" stroke-width="1" stroke-dasharray="3 3"/><line x1="268" y1="564.5" x2="1170" y2="564.5" stroke="#848078" stroke-width="1" stroke-dasharray="3 3"/><line x1="268" y1="549.5" x2="1170" y2="549.5" stroke="#848078" stroke-width="1" stroke-dasharray="3 3"/><line x1="268" y1="533.5" x2="1170" y2="533.5" stroke="#848078" stroke-width="1" stroke-dasharray="3 3"/><line x1="268" y1="518.5" x2="1170" y2="518.5" stroke="#848078" stroke-width="1" stroke-dasharray="3 3"/><line x1="268" y1="502.5" x2="1170" y2="502.5" stroke="#848078" stroke-width="1" stroke-dasharray="3 3"/><line x1="268" y1="487.5" x2="1170" y2="487.5" stroke="#848078" stroke-width="1" stroke-dasharray="3 3"/><line x1="268" y1="471.5" x2="1170" y2="471.5" stroke="#848078" stroke-width="1" stroke-dasharray="3 3"/><line x1="268" y1="456.5" x2="1170" y2="456.5" stroke="#848078" stroke-width="1" stroke-dasharray="3 3"/><line x1="268" y1="441.5" x2="1170" y2="441.5" stroke="#848078" stroke-width="1" stroke-dasharray="3 3"/><line x1="268" y1="425.5" x2="1170" y2="425.5" stroke="#848078" stroke-width="1" stroke-dasharray="3 3"/><line x1="268" y1="410.5" x2="1170" y2="410.5" stroke="#848078" stroke-width="1" stroke-dasharray="3 3"/><line x1="268" y1="394.5" x2="1170" y2="394.5" stroke="#848078" stroke-width="1" stroke-dasharray="3 3"/><line x1="268" y1="379.5" x2="1170" y2="379.5" stroke="#848078" stroke-width="1" stroke-dasharray="3 3"/><line x1="268" y1="363.5" x2="1170" y2="363.5" stroke="#848078" stroke-width="1" stroke-dasharray="3 3"/><line x1="268" y1="348.5" x2="1170" y2="348.5" stroke="#848078" stroke-width="1" stroke-dasharray="3 3"/><line x1="268" y1="332.5" x2="1170" y2="332.5" stroke="#848078" stroke-width="1" stroke-dasharray="3 3"/><line x1="268" y1="317.5" x2="1170" y2="317.5" stroke="#848078" stroke-width="1" stroke-dasharray="3 3"/><line x1="268" y1="301.5" x2="1170" y2="301.5" stroke="#848078" stroke-width="1" stroke-dasharray="3 3"/><line x1="268" y1="286.5" x2="1170" y2="286.5" stroke="#848078" stroke-width="1" stroke-dasharray="3 3"/><line x1="268" y1="270.5" x2="1170" y2="270.5" stroke="#848078" stroke-width="1" stroke-dasharray="3 3"/><line x1="268" y1="255.5" x2="1170" y2="255.5" stroke="#848078" stroke-width="1" stroke-dasharray="3 3"/><line x1="268" y1="239.5" x2="1170" y2="239.5" stroke="#848078" stroke-width="1" stroke-dasharray="3 3"/><line x1="268" y1="224.5" x2="1170" y2="224.5" stroke="#848078" stroke-width="1" stroke-dasharray="3 3"/><line x1="268" y1="208.5" x2="1170" y2="208.5" stroke="#848078" stroke-width="1" stroke-dasharray="3 3"/><line x1="268" y1="193.5" x2="1170" y2="193.5" stroke="#848078" stroke-width="1" stroke-dasharray="3 3"/><line x1="268" y1="177.5" x2="1170" y2="177.5" stroke="#848078" stroke-width="1" stroke-dasharray="3 3"/><line x1="268" y1="162.5" x2="1170" y2="162.5" stroke="#848078" stroke-width="1" stroke-dasharray="3 3"/><line x1="268" y1="146.5" x2="1170" y2="146.5" stroke="#848078" stroke-width="1" stroke-dasharray="3 3"/><line x1="295.5" y1="131" x2="295.5" y2="756" stroke="#848078" stroke-width="1" stroke-dasharray="3 3"/><line x1="319.5" y1="131" x2="319.5" y2="756" stroke="#848078" stroke-width="1" stroke-dasharray="3 3"/><line x1="342.5" y1="131" x2="342.5" y2="756" stroke="#848078" stroke-width="1" stroke-dasharray="3 3"/><line x1="366.5" y1="131" x2="366.5" y2="756" stroke="#848078" stroke-width="1" stroke-dasharray="3 3"/><line x1="390.5" y1="131" x2="390.5" y2="756" stroke="#848078" stroke-width="1" stroke-dasharray="3 3"/><line x1="413.5" y1="131" x2="413.5" y2="756" stroke="#848078" stroke-width="1" stroke-dasharray="3 3"/><line x1="437.5" y1="131" x2="437.5" y2="756" stroke="#848078" stroke-width="1" stroke-dasharray="3 3"/><line x1="460.5" y1="131" x2="460.5" y2="756" stroke="#848078" stroke-width="1" stroke-dasharray="3 3"/><line x1="484.5" y1="131" x2="484.5" y2="756" stroke="#848078" stroke-width="1" stroke-dasharray="3 3"/><line x1="508.5" y1="131" x2="508.5" y2="756" stroke="#848078" stroke-width="1" stroke-dasharray="3 3"/><line x1="531.5" y1="131" x2="531.5" y2="756" stroke="#848078" stroke-width="1" stroke-dasharray="3 3"/><line x1="555.5" y1="131" x2="555.5" y2="756" stroke="#848078" stroke-width="1" stroke-dasharray="3 3"/><line x1="579.5" y1="131" x2="579.5" y2="756" stroke="#848078" stroke-width="1" stroke-dasharray="3 3"/><line x1="602.5" y1="131" x2="602.5" y2="756" stroke="#848078" stroke-width="1" stroke-dasharray="3 3"/><line x1="626.5" y1="131" x2="626.5" y2="756" stroke="#848078" stroke-width="1" stroke-dasharray="3 3"/><line x1="650.5" y1="131" x2="650.5" y2="756" stroke="#848078" stroke-width="1" stroke-dasharray="3 3"/><line x1="673.5" y1="131" x2="673.5" y2="756" stroke="#848078" stroke-width="1" stroke-dasharray="3 3"/><line x1="697.5" y1="131" x2="697.5" y2="756" stroke="#848078" stroke-width="1" stroke-dasharray="3 3"/><line x1="721.5" y1="131" x2="721.5" y2="756" stroke="#848078" stroke-width="1" stroke-dasharray="3 3"/><line x1="744.5" y1="131" x2="744.5" y2="756" stroke="#848078" stroke-width="1" stroke-dasharray="3 3"/><line x1="768.5" y1="131" x2="768.5" y2="756" stroke="#848078" stroke-width="1" stroke-dasharray="3 3"/><line x1="792.5" y1="131" x2="792.5" y2="756" stroke="#848078" stroke-width="1" stroke-dasharray="3 3"/><line x1="815.5" y1="131" x2="815.5" y2="756" stroke="#848078" stroke-width="1" stroke-dasharray="3 3"/><line x1="839.5" y1="131" x2="839.5" y2="756" stroke="#848078" stroke-width="1" stroke-dasharray="3 3"/><line x1="863.5" y1="131" x2="863.5" y2="756" stroke="#848078" stroke-width="1" stroke-dasharray="3 3"/><line x1="886.5" y1="131" x2="886.5" y2="756" stroke="#848078" stroke-width="1" stroke-dasharray="3 3"/><line x1="910.5" y1="131" x2="910.5" y2="756" stroke="#848078" stroke-width="1" stroke-dasharray="3 3"/><line x1="934.5" y1="131" x2="934.5" y2="756" stroke="#848078" stroke-width="1" stroke-dasharray="3 3"/><line x1="957.5" y1="131" x2="957.5" y2="756" stroke="#848078" stroke-width="1" stroke-dasharray="3 3"/><line x1="981.5" y1="131" x2="981.5" y2="756" stroke="#848078" stroke-width="1" stroke-dasharray="3 3"/><line x1="1004.5" y1="131" x2="1004.5" y2="756" stroke="#848078" stroke-width="1" stroke-dasharray="3 3"/><line x1="1028.5" y1="131" x2="1028.5" y2="756" stroke="#848078" stroke-width="1" stroke-dasharray="3 3"/><line x1="1052.5" y1="131" x2="1052.5" y2="756" stroke="#848078" stroke-width="1" stroke-dasharray="3 3"/><line x1="1075.5" y1="131" x2="1075.5" y2="756" stroke="#848078" stroke-width="1" stroke-dasharray="3 3"/><line x1="1099.5" y1="131" x2="1099.5" y2="756" stroke="#848078" stroke-width="1" stroke-dasharray="3 3"/><line x1="1123.5" y1="131" x2="1123.5" y2="756" stroke="#848078" stroke-width="1" stroke-dasharray="3 3"/><line x1="1146.5" y1="131" x2="1146.5" y2="756" stroke="#848078" stroke-width="1" stroke-dasharray="3 3"/><line x1="1170.5" y1="134" x2="1170.5" y2="752" stroke="#000" stroke-width="1" stroke-dasharray="3 2"/><rect x="276" y="752" width="1" height="1.5" fill="#555"/><rect x="281" y="752" width="1" height="1.5" fill="#555"/><rect x="285" y="752" width="1" height="1.5" fill="#555"/><rect x="290" y="752" width="1" height="1.5" fill="#555"/><rect x="295" y="752" width="1" height="4" fill="#848078"/><rect x="300" y="752" width="1" height="1.5" fill="#555"/><rect x="304" y="752" width="1" height="1.5" fill="#555"/><rect x="309" y="752" width="1" height="1.5" fill="#555"/><rect x="314" y="752" width="1" height="1.5" fill="#555"/><rect x="319" y="752" width="1" height="4" fill="#848078"/><rect x="323" y="752" width="1" height="1.5" fill="#555"/><rect x="328" y="752" width="1" height="1.5" fill="#555"/><rect x="333" y="752" width="1" height="1.5" fill="#555"/><rect x="338" y="752" width="1" height="1.5" fill="#555"/><rect x="342" y="752" width="1" height="4" fill="#848078"/><rect x="347" y="752" width="1" height="1.5" fill="#555"/><rect x="352" y="752" width="1" height="1.5" fill="#555"/><rect x="356" y="752" width="1" height="1.5" fill="#555"/><rect x="361" y="752" width="1" height="1.5" fill="#555"/><rect x="366" y="752" width="1" height="4" fill="#848078"/><rect x="371" y="752" width="1" height="1.5" fill="#555"/><rect x="375" y="752" width="1" height="1.5" fill="#555"/><rect x="380" y="752" width="1" height="1.5" fill="#555"/><rect x="385" y="752" width="1" height="1.5" fill="#555"/><rect x="390" y="752" width="1" height="4" fill="#848078"/><rect x="394" y="752" width="1" height="1.5" fill="#555"/><rect x="399" y="752" width="1" height="1.5" fill="#555"/><rect x="404" y="752" width="1" height="1.5" fill="#555"/><rect x="408" y="752" width="1" height="1.5" fill="#555"/><rect x="413" y="752" width="1" height="4" fill="#848078"/><rect x="418" y="752" width="1" height="1.5" fill="#555"/><rect x="423" y="752" width="1" height="1.5" fill="#555"/><rect x="427" y="752" width="1" height="1.5" fill="#555"/><rect x="432" y="752" width="1" height="1.5" fill="#555"/><rect x="437" y="752" width="1" height="4" fill="#848078"/><rect x="442" y="752" width="1" height="1.5" fill="#555"/><rect x="446" y="752" width="1" height="1.5" fill="#555"/><rect x="451" y="752" width="1" height="1.5" fill="#555"/><rect x="456" y="752" width="1" height="1.5" fill="#555"/><rect x="460" y="752" width="1" height="4" fill="#848078"/><rect x="465" y="752" width="1" height="1.5" fill="#555"/><rect x="470" y="752" width="1" height="1.5" fill="#555"/><rect x="475" y="752" width="1" height="1.5" fill="#555"/><rect x="479" y="752" width="1" height="1.5" fill="#555"/><rect x="484" y="752" width="1" height="4" fill="#848078"/><rect x="489" y="752" width="1" height="1.5" fill="#555"/><rect x="494" y="752" width="1" height="1.5" fill="#555"/><rect x="498" y="752" width="1" height="1.5" fill="#555"/><rect x="503" y="752" width="1" height="1.5" fill="#555"/><rect x="508" y="752" width="1" height="4" fill="#848078"/><rect x="513" y="752" width="1" height="1.5" fill="#555"/><rect x="517" y="752" width="1" height="1.5" fill="#555"/><rect x="522" y="752" width="1" height="1.5" fill="#555"/><rect x="527" y="752" width="1" height="1.5" fill="#555"/><rect x="531" y="752" width="1" height="4" fill="#848078"/><rect x="536" y="752" width="1" height="1.5" fill="#555"/><rect x="541" y="752" width="1" height="1.5" fill="#555"/><rect x="546" y="752" width="1" height="1.5" fill="#555"/><rect x="550" y="752" width="1" height="1.5" fill="#555"/><rect x="555" y="752" width="1" height="4" fill="#848078"/><rect x="560" y="752" width="1" height="1.5" fill="#555"/><rect x="565" y="752" width="1" height="1.5" fill="#555"/><rect x="569" y="752" width="1" height="1.5" fill="#555"/><rect x="574" y="752" width="1" height="1.5" fill="#555"/><rect x="579" y="752" width="1" height="4" fill="#848078"/><rect x="583" y="752" width="1" height="1.5" fill="#555"/><rect x="588" y="752" width="1" height="1.5" fill="#555"/><rect x="593" y="752" width="1" height="1.5" fill="#555"/><rect x="598" y="752" width="1" height="1.5" fill="#555"/><rect x="602" y="752" width="1" height="4" fill="#848078"/><rect x="607" y="752" width="1" height="1.5" fill="#555"/><rect x="612" y="752" width="1" height="1.5" fill="#555"/><rect x="617" y="752" width="1" height="1.5" fill="#555"/><rect x="621" y="752" width="1" height="1.5" fill="#555"/><rect x="626" y="752" width="1" height="4" fill="#848078"/><rect x="631" y="752" width="1" height="1.5" fill="#555"/><rect x="636" y="752" width="1" height="1.5" fill="#555"/><rect x="640" y="752" width="1" height="1.5" fill="#555"/><rect x="645" y="752" width="1" height="1.5" fill="#555"/><rect x="650" y="752" width="1" height="4" fill="#848078"/><rect x="654" y="752" width="1" height="1.5" fill="#555"/><rect x="659" y="752" width="1" height="1.5" fill="#555"/><rect x="664" y="752" width="1" height="1.5" fill="#555"/><rect x="669" y="752" width="1" height="1.5" fill="#555"/><rect x="673" y="752" width="1" height="4" fill="#848078"/><rect x="678" y="752" width="1" height="1.5" fill="#555"/><rect x="683" y="752" width="1" height="1.5" fill="#555"/><rect x="688" y="752" width="1" height="1.5" fill="#555"/><rect x="692" y="752" width="1" height="1.5" fill="#555"/><rect x="697" y="752" width="1" height="4" fill="#848078"/><rect x="702" y="752" width="1" height="1.5" fill="#555"/><rect x="706" y="752" width="1" height="1.5" fill="#555"/><rect x="711" y="752" width="1" height="1.5" fill="#555"/><rect x="716" y="752" width="1" height="1.5" fill="#555"/><rect x="721" y="752" width="1" height="4" fill="#848078"/><rect x="725" y="752" width="1" height="1.5" fill="#555"/><rect x="730" y="752" width="1" height="1.5" fill="#555"/><rect x="735" y="752" width="1" height="1.5" fill="#555"/><rect x="740" y="752" width="1" height="1.5" fill="#555"/><rect x="744" y="752" width="1" height="4" fill="#848078"/><rect x="749" y="752" width="1" height="1.5" fill="#555"/><rect x="754" y="752" width="1" height="1.5" fill="#555"/><rect x="758" y="752" width="1" height="1.5" fill="#555"/><rect x="763" y="752" width="1" height="1.5" fill="#555"/><rect x="768" y="752" width="1" height="4" fill="#848078"/><rect x="773" y="752" width="1" height="1.5" fill="#555"/><rect x="777" y="752" width="1" height="1.5" fill="#555"/><rect x="782" y="752" width="1" height="1.5" fill="#555"/><rect x="787" y="752" width="1" height="1.5" fill="#555"/><rect x="792" y="752" width="1" height="4" fill="#848078"/><rect x="796" y="752" width="1" height="1.5" fill="#555"/><rect x="801" y="752" width="1" height="1.5" fill="#555"/><rect x="806" y="752" width="1" height="1.5" fill="#555"/><rect x="811" y="752" width="1" height="1.5" fill="#555"/><rect x="815" y="752" width="1" height="4" fill="#848078"/><rect x="820" y="752" width="1" height="1.5" fill="#555"/><rect x="825" y="752" width="1" height="1.5" fill="#555"/><rect x="829" y="752" width="1" height="1.5" fill="#555"/><rect x="834" y="752" width="1" height="1.5" fill="#555"/><rect x="839" y="752" width="1" height="4" fill="#848078"/><rect x="844" y="752" width="1" height="1.5" fill="#555"/><rect x="848" y="752" width="1" height="1.5" fill="#555"/><rect x="853" y="752" width="1" height="1.5" fill="#555"/><rect x="858" y="752" width="1" height="1.5" fill="#555"/><rect x="863" y="752" width="1" height="4" fill="#848078"/><rect x="867" y="752" width="1" height="1.5" fill="#555"/><rect x="872" y="752" width="1" height="1.5" fill="#555"/><rect x="877" y="752" width="1" height="1.5" fill="#555"/><rect x="881" y="752" width="1" height="1.5" fill="#555"/><rect x="886" y="752" width="1" height="4" fill="#848078"/><rect x="891" y="752" width="1" height="1.5" fill="#555"/><rect x="896" y="752" width="1" height="1.5" fill="#555"/><rect x="900" y="752" width="1" height="1.5" fill="#555"/><rect x="905" y="752" width="1" height="1.5" fill="#555"/><rect x="910" y="752" width="1" height="4" fill="#848078"/><rect x="915" y="752" width="1" height="1.5" fill="#555"/><rect x="919" y="752" width="1" height="1.5" fill="#555"/><rect x="924" y="752" width="1" height="1.5" fill="#555"/><rect x="929" y="752" width="1" height="1.5" fill="#555"/><rect x="934" y="752" width="1" height="4" fill="#848078"/><rect x="938" y="752" width="1" height="1.5" fill="#555"/><rect x="943" y="752" width="1" height="1.5" fill="#555"/><rect x="948" y="752" width="1" height="1.5" fill="#555"/><rect x="952" y="752" width="1" height="1.5" fill="#555"/><rect x="957" y="752" width="1" height="4" fill="#848078"/><rect x="962" y="752" width="1" height="1.5" fill="#555"/><rect x="967" y="752" width="1" height="1.5" fill="#555"/><rect x="971" y="752" width="1" height="1.5" fill="#555"/><rect x="976" y="752" width="1" height="1.5" fill="#555"/><rect x="981" y="752" width="1" height="4" fill="#848078"/><rect x="986" y="752" width="1" height="1.5" fill="#555"/><rect x="990" y="752" width="1" height="1.5" fill="#555"/><rect x="995" y="752" width="1" height="1.5" fill="#555"/><rect x="1000" y="752" width="1" height="1.5" fill="#555"/><rect x="1004" y="752" width="1" height="4" fill="#848078"/><rect x="1009" y="752" width="1" height="1.5" fill="#555"/><rect x="1014" y="752" width="1" height="1.5" fill="#555"/><rect x="1019" y="752" width="1" height="1.5" fill="#555"/><rect x="1023" y="752" width="1" height="1.5" fill="#555"/><rect x="1028" y="752" width="1" height="4" fill="#848078"/><rect x="1033" y="752" width="1" height="1.5" fill="#555"/><rect x="1038" y="752" width="1" height="1.5" fill="#555"/><rect x="1042" y="752" width="1" height="1.5" fill="#555"/><rect x="1047" y="752" width="1" height="1.5" fill="#555"/><rect x="1052" y="752" width="1" height="4" fill="#848078"/><rect x="1056" y="752" width="1" height="1.5" fill="#555"/><rect x="1061" y="752" width="1" height="1.5" fill="#555"/><rect x="1066" y="752" width="1" height="1.5" fill="#555"/><rect x="1071" y="752" width="1" height="1.5" fill="#555"/><rect x="1075" y="752" width="1" height="4" fill="#848078"/><rect x="1080" y="752" width="1" height="1.5" fill="#555"/><rect x="1085" y="752" width="1" height="1.5" fill="#555"/><rect x="1090" y="752" width="1" height="1.5" fill="#555"/><rect x="1094" y="752" width="1" height="1.5" fill="#555"/><rect x="1099" y="752" width="1" height="4" fill="#848078"/><rect x="1104" y="752" width="1" height="1.5" fill="#555"/><rect x="1109" y="752" width="1" height="1.5" fill="#555"/><rect x="1113" y="752" width="1" height="1.5" fill="#555"/><rect x="1118" y="752" width="1" height="1.5" fill="#555"/><rect x="1123" y="752" width="1" height="4" fill="#848078"/><rect x="1127" y="752" width="1" height="1.5" fill="#555"/><rect x="1132" y="752" width="1" height="1.5" fill="#555"/><rect x="1137" y="752" width="1" height="1.5" fill="#555"/><rect x="1142" y="752" width="1" height="1.5" fill="#555"/><rect x="1146" y="752" width="1" height="4" fill="#848078"/><rect x="1151" y="752" width="1" height="1.5" fill="#555"/><rect x="1156" y="752" width="1" height="1.5" fill="#555"/><rect x="1161" y="752" width="1" height="1.5" fill="#555"/><rect x="1165" y="752" width="1" height="1.5" fill="#555"/><rect x="1170" y="752" width="1" height="4" fill="#848078"/><rect x="271" y="133" width="900" height="1.2" fill="#1a1a1a"/><rect x="271" y="133" width="2" height="619" fill="#111"/><rect x="271" y="750" width="900" height="2" fill="#111"/><polyline points="271.8,363.6 295.4,351.2 319.1,351.2 342.8,351.2 366.4,351.2 390.1,351.2 413.7,351.2 437.4,351.2 461.0,351.2 484.6,354.0 508.3,354.3 532.0,356.6 555.6,358.2 579.2,361.3 602.9,365.1 626.5,370.5 650.2,377.5 673.8,385.3 697.5,395.0 721.1,407.7 744.8,424.0 768.5,441.0 792.1,441.0 815.8,441.0 839.4,441.0 863.0,441.0 886.7,441.0 910.3,441.0 934.0,441.0 957.6,441.0 981.3,441.0 1005.0,441.0 1028.6,441.0 1052.2,441.0 1075.9,441.0 1099.5,441.0 1123.2,441.0 1146.8,540.1 1170.5,540.1" fill="none" stroke="#4a5a74" stroke-width="1.4"/><rect x="268.3" y="360.1" width="7" height="7" fill="#1c2e48"/><rect x="291.9" y="347.7" width="7" height="7" fill="#1c2e48"/><rect x="315.6" y="347.7" width="7" height="7" fill="#1c2e48"/><rect x="339.2" y="347.7" width="7" height="7" fill="#1c2e48"/><rect x="362.9" y="347.7" width="7" height="7" fill="#1c2e48"/><rect x="386.6" y="347.7" width="7" height="7" fill="#1c2e48"/><rect x="410.2" y="347.7" width="7" height="7" fill="#1c2e48"/><rect x="433.9" y="347.7" width="7" height="7" fill="#1c2e48"/><rect x="457.5" y="347.7" width="7" height="7" fill="#1c2e48"/><rect x="481.1" y="350.5" width="7" height="7" fill="#1c2e48"/><rect x="504.8" y="350.8" width="7" height="7" fill="#1c2e48"/><rect x="528.5" y="353.1" width="7" height="7" fill="#1c2e48"/><rect x="552.1" y="354.7" width="7" height="7" fill="#1c2e48"/><rect x="575.8" y="357.8" width="7" height="7" fill="#1c2e48"/><rect x="599.4" y="361.6" width="7" height="7" fill="#1c2e48"/><rect x="623.0" y="367.0" width="7" height="7" fill="#1c2e48"/><rect x="646.7" y="374.0" width="7" height="7" fill="#1c2e48"/><rect x="670.3" y="381.8" width="7" height="7" fill="#1c2e48"/><rect x="694.0" y="391.5" width="7" height="7" fill="#1c2e48"/><rect x="717.6" y="404.2" width="7" height="7" fill="#1c2e48"/><rect x="741.3" y="420.5" width="7" height="7" fill="#1c2e48"/><rect x="765.0" y="437.5" width="7" height="7" fill="#1c2e48"/><rect x="788.6" y="437.5" width="7" height="7" fill="#1c2e48"/><rect x="812.2" y="437.5" width="7" height="7" fill="#1c2e48"/><rect x="835.9" y="437.5" width="7" height="7" fill="#1c2e48"/><rect x="859.5" y="437.5" width="7" height="7" fill="#1c2e48"/><rect x="883.2" y="437.5" width="7" height="7" fill="#1c2e48"/><rect x="906.8" y="437.5" width="7" height="7" fill="#1c2e48"/><rect x="930.5" y="437.5" width="7" height="7" fill="#1c2e48"/><rect x="954.1" y="437.5" width="7" height="7" fill="#1c2e48"/><rect x="977.8" y="437.5" width="7" height="7" fill="#1c2e48"/><rect x="1001.5" y="437.5" width="7" height="7" fill="#1c2e48"/><rect x="1025.1" y="437.5" width="7" height="7" fill="#1c2e48"/><rect x="1048.8" y="437.5" width="7" height="7" fill="#1c2e48"/><rect x="1072.4" y="437.5" width="7" height="7" fill="#1c2e48"/><rect x="1096.0" y="437.5" width="7" height="7" fill="#1c2e48"/><rect x="1119.7" y="437.5" width="7" height="7" fill="#1c2e48"/><rect x="1143.3" y="536.6" width="7" height="7" fill="#1c2e48"/><rect x="1167.0" y="536.6" width="7" height="7" fill="#1c2e48"/><text x="271.8" y="355.6" font-family="Liberation Sans" font-size="9.5" fill="#922420" text-anchor="middle" letter-spacing="-0.3">2,50</text><text x="342.8" y="343.2" font-family="Liberation Sans" font-size="9.5" fill="#922420" text-anchor="middle" letter-spacing="-0.3">2,58</text><text x="413.7" y="343.2" font-family="Liberation Sans" font-size="9.5" fill="#922420" text-anchor="middle" letter-spacing="-0.3">2,58</text><text x="484.6" y="346.0" font-family="Liberation Sans" font-size="9.5" fill="#922420" text-anchor="middle" letter-spacing="-0.3">2,56</text><text x="555.6" y="350.2" font-family="Liberation Sans" font-size="9.5" fill="#922420" text-anchor="middle" letter-spacing="-0.3">2,53</text><text x="626.5" y="362.5" font-family="Liberation Sans" font-size="9.5" fill="#922420" text-anchor="middle" letter-spacing="-0.3">2,45</text><text x="697.5" y="387.0" font-family="Liberation Sans" font-size="9.5" fill="#922420" text-anchor="middle" letter-spacing="-0.3">2,30</text><text x="768.5" y="433.0" font-family="Liberation Sans" font-size="9.5" fill="#922420" text-anchor="middle" letter-spacing="-0.3">2,00</text><text x="839.4" y="433.0" font-family="Liberation Sans" font-size="9.5" fill="#922420" text-anchor="middle" letter-spacing="-0.3">2,00</text><text x="910.3" y="433.0" font-family="Liberation Sans" font-size="9.5" fill="#922420" text-anchor="middle" letter-spacing="-0.3">2,00</text><text x="981.3" y="433.0" font-family="Liberation Sans" font-size="9.5" fill="#922420" text-anchor="middle" letter-spacing="-0.3">2,00</text><text x="1052.2" y="433.0" font-family="Liberation Sans" font-size="9.5" fill="#922420" text-anchor="middle" letter-spacing="-0.3">2,00</text><text x="1123.2" y="433.0" font-family="Liberation Sans" font-size="9.5" fill="#922420" text-anchor="middle" letter-spacing="-0.3">2,00</text><text x="266" y="754.7" font-family="Liberation Sans" font-size="11" fill="#222" text-anchor="end" letter-spacing="-0.45">0</text><text x="266" y="739.2" font-family="Liberation Sans" font-size="11" fill="#222" text-anchor="end" letter-spacing="-0.45">0,1</text><text x="266" y="723.7" font-family="Liberation Sans" font-size="11" fill="#222" text-anchor="end" letter-spacing="-0.45">0,2</text><text x="266" y="708.2" font-family="Liberation Sans" font-size="11" fill="#222" text-anchor="end" letter-spacing="-0.45">0,3</text><text x="266" y="692.8" font-family="Liberation Sans" font-size="11" fill="#222" text-anchor="end" letter-spacing="-0.45">0,4</text><text x="266" y="677.3" font-family="Liberation Sans" font-size="11" fill="#222" text-anchor="end" letter-spacing="-0.45">0,5</text><text x="266" y="661.8" font-family="Liberation Sans" font-size="11" fill="#222" text-anchor="end" letter-spacing="-0.45">0,6</text><text x="266" y="646.3" font-family="Liberation Sans" font-size="11" fill="#222" text-anchor="end" letter-spacing="-0.45">0,7</text><text x="266" y="630.8" font-family="Liberation Sans" font-size="11" fill="#222" text-anchor="end" letter-spacing="-0.45">0,8</text><text x="266" y="615.3" font-family="Liberation Sans" font-size="11" fill="#222" text-anchor="end" letter-spacing="-0.45">0,9</text><text x="266" y="599.9" font-family="Liberation Sans" font-size="11" fill="#222" text-anchor="end" letter-spacing="-0.45">1</text><text x="266" y="584.4" font-family="Liberation Sans" font-size="11" fill="#222" text-anchor="end" letter-spacing="-0.45">1,1</text><text x="266" y="568.9" font-family="Liberation Sans" font-size="11" fill="#222" text-anchor="end" letter-spacing="-0.45">1,2</text><text x="266" y="553.4" font-family="Liberation Sans" font-size="11" fill="#222" text-anchor="end" letter-spacing="-0.45">1,3</text><text x="266" y="537.9" font-family="Liberation Sans" font-size="11" fill="#222" text-anchor="end" letter-spacing="-0.45">1,4</text><text x="266" y="522.4" font-family="Liberation Sans" font-size="11" fill="#222" text-anchor="end" letter-spacing="-0.45">1,5</text><text x="266" y="506.9" font-family="Liberation Sans" font-size="11" fill="#222" text-anchor="end" letter-spacing="-0.45">1,6</text><text x="266" y="491.5" font-family="Liberation Sans" font-size="11" fill="#222" text-anchor="end" letter-spacing="-0.45">1,7</text><text x="266" y="476.0" font-family="Liberation Sans" font-size="11" fill="#222" text-anchor="end" letter-spacing="-0.45">1,8</text><text x="266" y="460.5" font-family="Liberation Sans" font-size="11" fill="#222" text-anchor="end" letter-spacing="-0.45">1,9</text><text x="266" y="445.0" font-family="Liberation Sans" font-size="11" fill="#222" text-anchor="end" letter-spacing="-0.45">2</text><text x="266" y="429.5" font-family="Liberation Sans" font-size="11" fill="#222" text-anchor="end" letter-spacing="-0.45">2,1</text><text x="266" y="414.0" font-family="Liberation Sans" font-size="11" fill="#222" text-anchor="end" letter-spacing="-0.45">2,2</text><text x="266" y="398.5" font-family="Liberation Sans" font-size="11" fill="#222" text-anchor="end" letter-spacing="-0.45">2,3</text><text x="266" y="383.1" font-family="Liberation Sans" font-size="11" fill="#222" text-anchor="end" letter-spacing="-0.45">2,4</text><text x="266" y="367.6" font-family="Liberation Sans" font-size="11" fill="#222" text-anchor="end" letter-spacing="-0.45">2,5</text><text x="266" y="352.1" font-family="Liberation Sans" font-size="11" fill="#222" text-anchor="end" letter-spacing="-0.45">2,6</text><text x="266" y="336.6" font-family="Liberation Sans" font-size="11" fill="#222" text-anchor="end" letter-spacing="-0.45">2,7</text><text x="266" y="321.1" font-family="Liberation Sans" font-size="11" fill="#222" text-anchor="end" letter-spacing="-0.45">2,8</text><text x="266" y="305.6" font-family="Liberation Sans" font-size="11" fill="#222" text-anchor="end" letter-spacing="-0.45">2,9</text><text x="266" y="290.2" font-family="Liberation Sans" font-size="11" fill="#222" text-anchor="end" letter-spacing="-0.45">3</text><text x="266" y="274.7" font-family="Liberation Sans" font-size="11" fill="#222" text-anchor="end" letter-spacing="-0.45">3,1</text><text x="266" y="259.2" font-family="Liberation Sans" font-size="11" fill="#222" text-anchor="end" letter-spacing="-0.45">3,2</text><text x="266" y="243.7" font-family="Liberation Sans" font-size="11" fill="#222" text-anchor="end" letter-spacing="-0.45">3,3</text><text x="266" y="228.2" font-family="Liberation Sans" font-size="11" fill="#222" text-anchor="end" letter-spacing="-0.45">3,4</text><text x="266" y="212.7" font-family="Liberation Sans" font-size="11" fill="#222" text-anchor="end" letter-spacing="-0.45">3,5</text><text x="266" y="197.2" font-family="Liberation Sans" font-size="11" fill="#222" text-anchor="end" letter-spacing="-0.45">3,6</text><text x="266" y="181.8" font-family="Liberation Sans" font-size="11" fill="#222" text-anchor="end" letter-spacing="-0.45">3,7</text><text x="266" y="166.3" font-family="Liberation Sans" font-size="11" fill="#222" text-anchor="end" letter-spacing="-0.45">3,8</text><text x="266" y="150.8" font-family="Liberation Sans" font-size="11" fill="#222" text-anchor="end" letter-spacing="-0.45">3,9</text><text transform="translate(299.4,757) rotate(-90)" font-family="Liberation Sans" font-size="11" fill="#222" text-anchor="end" letter-spacing="-0.45">-35</text><text transform="translate(323.1,757) rotate(-90)" font-family="Liberation Sans" font-size="11" fill="#222" text-anchor="end" letter-spacing="-0.45">-30</text><text transform="translate(346.8,757) rotate(-90)" font-family="Liberation Sans" font-size="11" fill="#222" text-anchor="end" letter-spacing="-0.45">-25</text><text transform="translate(370.4,757) rotate(-90)" font-family="Liberation Sans" font-size="11" fill="#222" text-anchor="end" letter-spacing="-0.45">-20</text><text transform="translate(394.1,757) rotate(-90)" font-family="Liberation Sans" font-size="11" fill="#222" text-anchor="end" letter-spacing="-0.45">-15</text><text transform="translate(417.7,757) rotate(-90)" font-family="Liberation Sans" font-size="11" fill="#222" text-anchor="end" letter-spacing="-0.45">-10</text><text transform="translate(441.4,757) rotate(-90)" font-family="Liberation Sans" font-size="11" fill="#222" text-anchor="end" letter-spacing="-0.45">-5</text><text transform="translate(465.0,757) rotate(-90)" font-family="Liberation Sans" font-size="11" fill="#222" text-anchor="end" letter-spacing="-0.45">0</text><text transform="translate(488.6,757) rotate(-90)" font-family="Liberation Sans" font-size="11" fill="#222" text-anchor="end" letter-spacing="-0.45">5</text><text transform="translate(512.3,757) rotate(-90)" font-family="Liberation Sans" font-size="11" fill="#222" text-anchor="end" letter-spacing="-0.45">10</text><text transform="translate(536.0,757) rotate(-90)" font-family="Liberation Sans" font-size="11" fill="#222" text-anchor="end" letter-spacing="-0.45">15</text><text transform="translate(559.6,757) rotate(-90)" font-family="Liberation Sans" font-size="11" fill="#222" text-anchor="end" letter-spacing="-0.45">20</text><text transform="translate(583.2,757) rotate(-90)" font-family="Liberation Sans" font-size="11" fill="#222" text-anchor="end" letter-spacing="-0.45">25</text><text transform="translate(606.9,757) rotate(-90)" font-family="Liberation Sans" font-size="11" fill="#222" text-anchor="end" letter-spacing="-0.45">30</text><text transform="translate(630.5,757) rotate(-90)" font-family="Liberation Sans" font-size="11" fill="#222" text-anchor="end" letter-spacing="-0.45">35</text><text transform="translate(654.2,757) rotate(-90)" font-family="Liberation Sans" font-size="11" fill="#222" text-anchor="end" letter-spacing="-0.45">40</text><text transform="translate(677.8,757) rotate(-90)" font-family="Liberation Sans" font-size="11" fill="#222" text-anchor="end" letter-spacing="-0.45">45</text><text transform="translate(701.5,757) rotate(-90)" font-family="Liberation Sans" font-size="11" fill="#222" text-anchor="end" letter-spacing="-0.45">50</text><text transform="translate(725.1,757) rotate(-90)" font-family="Liberation Sans" font-size="11" fill="#222" text-anchor="end" letter-spacing="-0.45">55</text><text transform="translate(748.8,757) rotate(-90)" font-family="Liberation Sans" font-size="11" fill="#222" text-anchor="end" letter-spacing="-0.45">60</text><text transform="translate(772.5,757) rotate(-90)" font-family="Liberation Sans" font-size="11" fill="#222" text-anchor="end" letter-spacing="-0.45">65</text><text transform="translate(796.1,757) rotate(-90)" font-family="Liberation Sans" font-size="11" fill="#222" text-anchor="end" letter-spacing="-0.45">70</text><text transform="translate(819.8,757) rotate(-90)" font-family="Liberation Sans" font-size="11" fill="#222" text-anchor="end" letter-spacing="-0.45">75</text><text transform="translate(843.4,757) rotate(-90)" font-family="Liberation Sans" font-size="11" fill="#222" text-anchor="end" letter-spacing="-0.45">80</text><text transform="translate(867.0,757) rotate(-90)" font-family="Liberation Sans" font-size="11" fill="#222" text-anchor="end" letter-spacing="-0.45">85</text><text transform="translate(890.7,757) rotate(-90)" font-family="Liberation Sans" font-size="11" fill="#222" text-anchor="end" letter-spacing="-0.45">90</text><text transform="translate(914.3,757) rotate(-90)" font-family="Liberation Sans" font-size="11" fill="#222" text-anchor="end" letter-spacing="-0.45">95</text><text transform="translate(938.0,757) rotate(-90)" font-family="Liberation Sans" font-size="11" fill="#222" text-anchor="end" letter-spacing="-0.45">100</text><text transform="translate(961.6,757) rotate(-90)" font-family="Liberation Sans" font-size="11" fill="#222" text-anchor="end" letter-spacing="-0.45">105</text><text transform="translate(985.3,757) rotate(-90)" font-family="Liberation Sans" font-size="11" fill="#222" text-anchor="end" letter-spacing="-0.45">110</text><text transform="translate(1009.0,757) rotate(-90)" font-family="Liberation Sans" font-size="11" fill="#222" text-anchor="end" letter-spacing="-0.45">115</text><text transform="translate(1032.6,757) rotate(-90)" font-family="Liberation Sans" font-size="11" fill="#222" text-anchor="end" letter-spacing="-0.45">120</text><text transform="translate(1056.2,757) rotate(-90)" font-family="Liberation Sans" font-size="11" fill="#222" text-anchor="end" letter-spacing="-0.45">125</text><text transform="translate(1079.9,757) rotate(-90)" font-family="Liberation Sans" font-size="11" fill="#222" text-anchor="end" letter-spacing="-0.45">130</text><text transform="translate(1103.5,757) rotate(-90)" font-family="Liberation Sans" font-size="11" fill="#222" text-anchor="end" letter-spacing="-0.45">135</text><text transform="translate(1127.2,757) rotate(-90)" font-family="Liberation Sans" font-size="11" fill="#222" text-anchor="end" letter-spacing="-0.45">140</text><text transform="translate(1150.8,757) rotate(-90)" font-family="Liberation Sans" font-size="11" fill="#222" text-anchor="end" letter-spacing="-0.45">145</text><text transform="translate(1174.5,757) rotate(-90)" font-family="Liberation Sans" font-size="11" fill="#222" text-anchor="end" letter-spacing="-0.45">150</text><text x="517" y="125" font-family="Liberation Sans" font-size="11" font-weight="bold" fill="#111">Экстраполирующий коэффициент пересчета GBC для обогащения</text><text x="667" y="800" font-family="Liberation Sans" font-size="11" font-weight="bold" fill="#111" letter-spacing="-0.3">Температура, град.С</text><text transform="translate(244,508) rotate(-90)" font-family="Liberation Sans" font-size="11" font-weight="bold" fill="#111" letter-spacing="-0.2">Коэффициент коррекции</text></svg>
<div class="a" style="left:205px;top:826px;width:993px;height:1px;background:#aca899"></div>
<div class="a" style="left:206px;top:827px;width:992px;height:1px;background:#fdfcf6"></div>
<div class="a" style="left:205px;top:826px;width:1px;height:87px;background:#aca899"></div>
<div class="a" style="left:206px;top:911px;width:992px;height:1px;background:#fdfcf6"></div>
<div class="a" style="left:205px;top:912px;width:995px;height:1px;background:#a8a594"></div>
<div class="a" style="left:0px;top:913px;width:1200px;height:3px;background:#ece9d8"></div>
<div class="a" style="left:0px;top:916px;width:1200px;height:1px;background:#aca899"></div>
<div class="a" style="left:297px;top:831px;width:1px;height:77px;background:#c0bca8"></div><div class="a" style="left:298px;top:831px;width:1px;height:77px;background:#fff"></div>
<div class="a" style="left:395px;top:831px;width:1px;height:77px;background:#c0bca8"></div><div class="a" style="left:396px;top:831px;width:1px;height:77px;background:#fff"></div>
<div class="a" style="left:583px;top:831px;width:1px;height:77px;background:#c0bca8"></div><div class="a" style="left:584px;top:831px;width:1px;height:77px;background:#fff"></div>
<div class="t" style="left:214px;top:836px">Установить в</div>
<div class="t" style="left:311px;top:836px">Изменить на</div>
<div class="a" style="left:210px;top:859px;width:55px;height:18px;border-top:2px solid #85827a;border-left:2px solid #85827a;border-bottom:1px solid #fdfcf6;border-right:1px solid #fdfcf6;background:#ecead8"></div>
<div class="t" style="left:213px;top:861px">0,00</div>
<svg class="a" style="left:249px;top:861px" width="15" height="15"><path d="M0 15 L15 0 V15 Z" fill="#e4e2d4"/><path d="M0 0 H15 L0 15 Z" fill="#f4f2ea"/><path d="M0 14.5 H15 M14.5 0 V15" stroke="#8a8878" stroke-width="1"/><path d="M0.5 15 L15 0.5" stroke="#222" stroke-width="1"/><path d="M4 8 V3 M2.2 4.8 L4 2.2 L5.8 4.8" fill="none" stroke="#000" stroke-width="1.6"/><path d="M11 7 V12 M9.2 10.2 L11 12.8 L12.8 10.2" fill="none" stroke="#000" stroke-width="1.6"/></svg>
<svg class="a" style="left:276px;top:862px" width="14" height="14"><defs><linearGradient id="gg276" x1="0" y1="0" x2="1" y2="1"><stop offset="0" stop-color="#4ab85a"/><stop offset="1" stop-color="#1e7a2e"/></linearGradient></defs><rect x="0" y="0" width="14" height="13" rx="1.5" fill="url(#gg276)"/><path d="M3 6.5 H10 M7 3 L10.5 6.5 L7 10" fill="none" stroke="#e8ffe0" stroke-width="2"/></svg>
<div class="a" style="left:308px;top:856px;width:55px;height:18px;border-top:2px solid #85827a;border-left:2px solid #85827a;border-bottom:1px solid #fdfcf6;border-right:1px solid #fdfcf6;background:#ecead8"></div>
<div class="t" style="left:311px;top:858px">0,00</div>
<svg class="a" style="left:347px;top:858px" width="15" height="15"><path d="M0 15 L15 0 V15 Z" fill="#e4e2d4"/><path d="M0 0 H15 L0 15 Z" fill="#f4f2ea"/><path d="M0 14.5 H15 M14.5 0 V15" stroke="#8a8878" stroke-width="1"/><path d="M0.5 15 L15 0.5" stroke="#222" stroke-width="1"/><path d="M4 8 V3 M2.2 4.8 L4 2.2 L5.8 4.8" fill="none" stroke="#000" stroke-width="1.6"/><path d="M11 7 V12 M9.2 10.2 L11 12.8 L12.8 10.2" fill="none" stroke="#000" stroke-width="1.6"/></svg>
<svg class="a" style="left:373px;top:858px" width="14" height="14"><defs><linearGradient id="gg373" x1="0" y1="0" x2="1" y2="1"><stop offset="0" stop-color="#4ab85a"/><stop offset="1" stop-color="#1e7a2e"/></linearGradient></defs><rect x="0" y="0" width="14" height="13" rx="1.5" fill="url(#gg373)"/><path d="M3 6.5 H10 M7 3 L10.5 6.5 L7 10" fill="none" stroke="#e8ffe0" stroke-width="2"/></svg>
<div class="a" style="left:312px;top:885px;width:12px;height:12px;border:1px solid #a0a090;background:linear-gradient(135deg,#dcdcd0,#fff)"></div>
<div class="t" style="left:329px;top:885px">процентов</div>
<svg class="a" style="left:407px;top:834px" width="80" height="68"><rect x="0.5" y="0.5" width="79" height="67" fill="#efeee6" stroke="#8a8880" stroke-width="1"/><line x1="7.5" y1="0" x2="7.5" y2="68" stroke="#a09c94" stroke-width="1"/><line x1="13.5" y1="0" x2="13.5" y2="68" stroke="#a09c94" stroke-width="1"/><line x1="20.5" y1="0" x2="20.5" y2="68" stroke="#a09c94" stroke-width="1"/><line x1="27.5" y1="0" x2="27.5" y2="68" stroke="#a09c94" stroke-width="1"/><line x1="33.5" y1="0" x2="33.5" y2="68" stroke="#a09c94" stroke-width="1"/><line x1="40.5" y1="0" x2="40.5" y2="68" stroke="#a09c94" stroke-width="1"/><line x1="47.5" y1="0" x2="47.5" y2="68" stroke="#a09c94" stroke-width="1"/><line x1="53.5" y1="0" x2="53.5" y2="68" stroke="#a09c94" stroke-width="1"/><line x1="60.5" y1="0" x2="60.5" y2="68" stroke="#a09c94" stroke-width="1"/><line x1="66.5" y1="0" x2="66.5" y2="68" stroke="#a09c94" stroke-width="1"/><line x1="73.5" y1="0" x2="73.5" y2="68" stroke="#a09c94" stroke-width="1"/><line x1="0" y1="7.5" x2="80" y2="7.5" stroke="#a09c94" stroke-width="1"/><line x1="0" y1="15.5" x2="80" y2="15.5" stroke="#a09c94" stroke-width="1"/><line x1="0" y1="22.5" x2="80" y2="22.5" stroke="#a09c94" stroke-width="1"/><line x1="0" y1="30.5" x2="80" y2="30.5" stroke="#a09c94" stroke-width="1"/><line x1="0" y1="37.5" x2="80" y2="37.5" stroke="#a09c94" stroke-width="1"/><line x1="0" y1="44.5" x2="80" y2="44.5" stroke="#a09c94" stroke-width="1"/><line x1="0" y1="52.5" x2="80" y2="52.5" stroke="#a09c94" stroke-width="1"/><line x1="0" y1="59.5" x2="80" y2="59.5" stroke="#a09c94" stroke-width="1"/><path d="M5 6 H22 Q38 7 52 28 Q64 45 75 63" fill="none" stroke="#3030b8" stroke-width="1.1"/><path d="M5 63 H24 Q40 60 56 40 Q66 25 74 8" fill="none" stroke="#c83838" stroke-width="1.1"/></svg>
<div class="a" style="left:499px;top:834px;width:72px;height:4px;border-top:1px solid #8c8a7c;background:#fafaf4;border-bottom:1px solid #d8d6c8"></div>
<div class="a" style="left:499px;top:833px;width:3px;height:9px;border-left:1px solid #fff;border-right:1px solid #6c6a5c;background:#ece9d8"></div>
<div class="a" style="left:499px;top:843px;width:72px;height:3px;background:repeating-linear-gradient(90deg,#303030 0 1px,transparent 1px 4.4px)"></div>
<div class="a" style="left:499px;top:852px;width:72px;height:4px;border-top:1px solid #8c8a7c;background:#fafaf4;border-bottom:1px solid #d8d6c8"></div>
<div class="a" style="left:530px;top:851px;width:3px;height:9px;border-left:1px solid #fff;border-right:1px solid #6c6a5c;background:#ece9d8"></div>
<div class="a" style="left:499px;top:861px;width:72px;height:3px;background:repeating-linear-gradient(90deg,#303030 0 1px,transparent 1px 4.4px)"></div>
<svg class="a" style="left:506px;top:874px" width="20" height="19"><rect x="0.5" y="0.5" width="19" height="18" rx="2" fill="#fff" stroke="#3a7ad0" stroke-width="1"/><rect x="0.5" y="0.5" width="19" height="3" fill="#3a7ad0"/><rect x="2.5" y="4.5" width="15" height="12" fill="#e4f0fc" stroke="#8ab0e0" stroke-width="1"/><path d="M4 15 L16 5" stroke="#d04040" stroke-width="1.3"/></svg>
<div class="t" style="left:535px;top:871.5px">Интер-</div>
<div class="t" style="left:531px;top:884px">поляция</div>
<div class="a" style="left:597px;top:841px;width:12px;height:12px;border-top:2px solid #6a6860;border-left:2px solid #6a6860;border-right:1px solid #fff;border-bottom:1px solid #fff;background:#fff"><svg class="a" style="left:0px;top:0px" width="9" height="9"><path d="M1.5 4 L3.5 6.5 L8 1.5" fill="none" stroke="#000" stroke-width="2"/></svg></div>
<div class="t" style="left:613px;top:840.5px;letter-spacing:-0.3px">отображать все точки</div>
<div class="t" style="left:2px;top:918px">Январь-7.2</div>
<div class="a" style="left:84px;top:918px;width:1px;height:13px;background:#c0bca8"></div>
<div class="t" style="left:87px;top:918px">неизв. ПО</div>
<div class="a" style="left:160px;top:918px;width:1px;height:13px;background:#c0bca8"></div>
<div class="t" style="left:162px;top:918px">Y=2,739</div>
<div class="a" style="left:0;top:932px;width:1200px;height:28px;background:linear-gradient(#1c4ec0 0px,#3a7cf2 1px,#3274ec 3px,#2862de 6px,#245ddb 12px,#245ddb 23px,#1e50c8 28px)"></div>
<div class="a" style="left:0;top:932px;width:90px;height:28px;border-radius:0 10px 10px 0;background:linear-gradient(#3c9a3c 0px,#4cb84c 3px,#3aa83a 10px,#309a30 20px,#2a8a2a 28px);box-shadow:inset -2px 0 3px rgba(0,0,0,0.3)"></div>
<svg class="a" style="left:10px;top:936px" width="20" height="20"><path d="M2 3 Q5 1 9 3 V9 Q5 7 2 9 Z" fill="#f05030"/><path d="M10 3 Q14 5 18 3 V9 Q14 11 10 9 Z" fill="#50c040"/><path d="M2 10 Q5 8 9 10 V16 Q5 14 2 16 Z" fill="#3080f0"/><path d="M10 10 Q14 12 18 10 V16 Q14 18 10 16 Z" fill="#f8c820"/></svg>
<div class="t" style="left:33px;top:935px;font-size:16px;line-height:20px;font-weight:bold;font-style:italic;color:#fff;letter-spacing:-0.3px;text-shadow:1px 1px 1px #1a4a1a">пуск</div>
<svg class="a" style="left:100px;top:937px" width="18" height="18"><path d="M4 5 Q9 0 15 4 L13 6 Q9 3 6 6 Z" fill="#d04848"/><path d="M15 4 Q18 9 14 15 L12 13 Q14 9 13 6 Z" fill="#a02020"/><path d="M3 9 Q3 6 7 6 Q11 6 11 9 L11 15 Q7 17 3 15 Z" fill="#e8c070" stroke="#8a5a20" stroke-width="0.8"/><path d="M4 10 H10" stroke="#f8e0a0" stroke-width="1"/></svg>
<svg class="a" style="left:123px;top:937px" width="18" height="18"><circle cx="6" cy="5" r="3.5" fill="#c8d830" stroke="#5a5a10" stroke-width="0.8"/><circle cx="12" cy="6" r="3" fill="#e0d040" stroke="#5a5a10" stroke-width="0.8"/><circle cx="5.5" cy="12" r="3.5" fill="#e8d838" stroke="#5a5a10" stroke-width="0.8"/><circle cx="12" cy="12.5" r="3.5" fill="#c8d830" stroke="#5a5a10" stroke-width="0.8"/></svg>
<svg class="a" style="left:144px;top:937px" width="18" height="18"><defs><radialGradient id="og144" cx="0.4" cy="0.35" r="0.7"><stop offset="0" stop-color="#ff6a5a"/><stop offset="0.6" stop-color="#d01818"/><stop offset="1" stop-color="#8a0808"/></radialGradient></defs><circle cx="9" cy="9" r="8" fill="url(#og144)"/><ellipse cx="9" cy="9" rx="2.7" ry="5.4" fill="#4a4a78" stroke="#f0a0a0" stroke-width="0.6"/></svg>
<svg class="a" style="left:170px;top:938px" width="9" height="6"><path d="M1 0.5 L3.5 3 L1 5.5 M5 0.5 L7.5 3 L5 5.5" fill="none" stroke="#b8d0ff" stroke-width="1.3"/></svg>
<div class="a" style="left:185px;top:935px;width:149px;height:22px;border-radius:3px;background:linear-gradient(#4c8af4,#3c80f4 40%,#3478ee);box-shadow:inset 1px 1px 0 rgba(255,255,255,0.3)"></div>
<svg class="a" style="left:192px;top:937px" width="17.0" height="17.0"><defs><radialGradient id="og192" cx="0.4" cy="0.35" r="0.7"><stop offset="0" stop-color="#ff6a5a"/><stop offset="0.6" stop-color="#d01818"/><stop offset="1" stop-color="#8a0808"/></radialGradient></defs><circle cx="8.5" cy="8.5" r="7.5" fill="url(#og192)"/><ellipse cx="8.5" cy="8.5" rx="2.6" ry="5.1" fill="#4a4a78" stroke="#f0a0a0" stroke-width="0.6"/></svg>
<div class="t" style="left:211px;top:940px;color:#fff;letter-spacing:-0.15px">Ответ в Прошивки п...</div>
<div class="a" style="left:335px;top:935px;width:149px;height:22px;border-radius:3px;background:#1e4cc0;box-shadow:inset 1px 1px 2px rgba(0,0,0,0.4)"></div>
<svg class="a" style="left:343px;top:937px" width="18" height="18"><g transform="rotate(40 9 9)"><rect x="3" y="5" width="12" height="8" fill="#111"/><g fill="#888"><rect x="4" y="3" width="1" height="2"/><rect x="7" y="3" width="1" height="2"/><rect x="10" y="3" width="1" height="2"/><rect x="13" y="3" width="1" height="2"/><rect x="4" y="13" width="1" height="2"/><rect x="7" y="13" width="1" height="2"/><rect x="10" y="13" width="1" height="2"/><rect x="13" y="13" width="1" height="2"/></g></g></svg>
<div class="t" style="left:364px;top:940px;color:#fff;letter-spacing:-0.65px">CTPro - RR52.bin</div>
<div class="a" style="left:1114px;top:932px;width:86px;height:28px;background:linear-gradient(#1090f0 0px,#20a0f8 3px,#1590ee 12px,#1282e4 29px);border-left:1px solid #1080d8"></div>
<div class="t" style="left:1088px;top:940px;color:#fff;letter-spacing:-0.3px">RL</div>
<svg class="a" style="left:1104px;top:937px" width="18" height="18"><circle cx="9" cy="9" r="8" fill="#3a9ef8" stroke="#a8d4ff" stroke-width="1"/><path d="M11 5 L7 9 L11 13" fill="none" stroke="#fff" stroke-width="2"/></svg>
<svg class="a" style="left:1123px;top:937px" width="16" height="17"><rect x="6.5" y="1.5" width="8" height="7" fill="#3a4090" stroke="#90a0e0" stroke-width="1"/><rect x="1.5" y="6.5" width="8" height="7" fill="#2a3070" stroke="#90a0e0" stroke-width="1"/><path d="M2 15 H9 M7 10 H14" stroke="#e0e0f0" stroke-width="1.5"/></svg>
<svg class="a" style="left:1141px;top:937px" width="16" height="17"><rect x="1" y="1" width="14" height="15" fill="#f4f4f4"/><path d="M1 3 L6 1 L11 9 L7 16 H1 Z" fill="#e02828"/><path d="M8 1 H14 L10 7 Z" fill="#e83030"/><rect x="10" y="11" width="5" height="5" fill="#111"/></svg>
<div class="t" style="left:1161px;top:940px;color:#fff;letter-spacing:-0.2px">23:10</div>
</body></html>
